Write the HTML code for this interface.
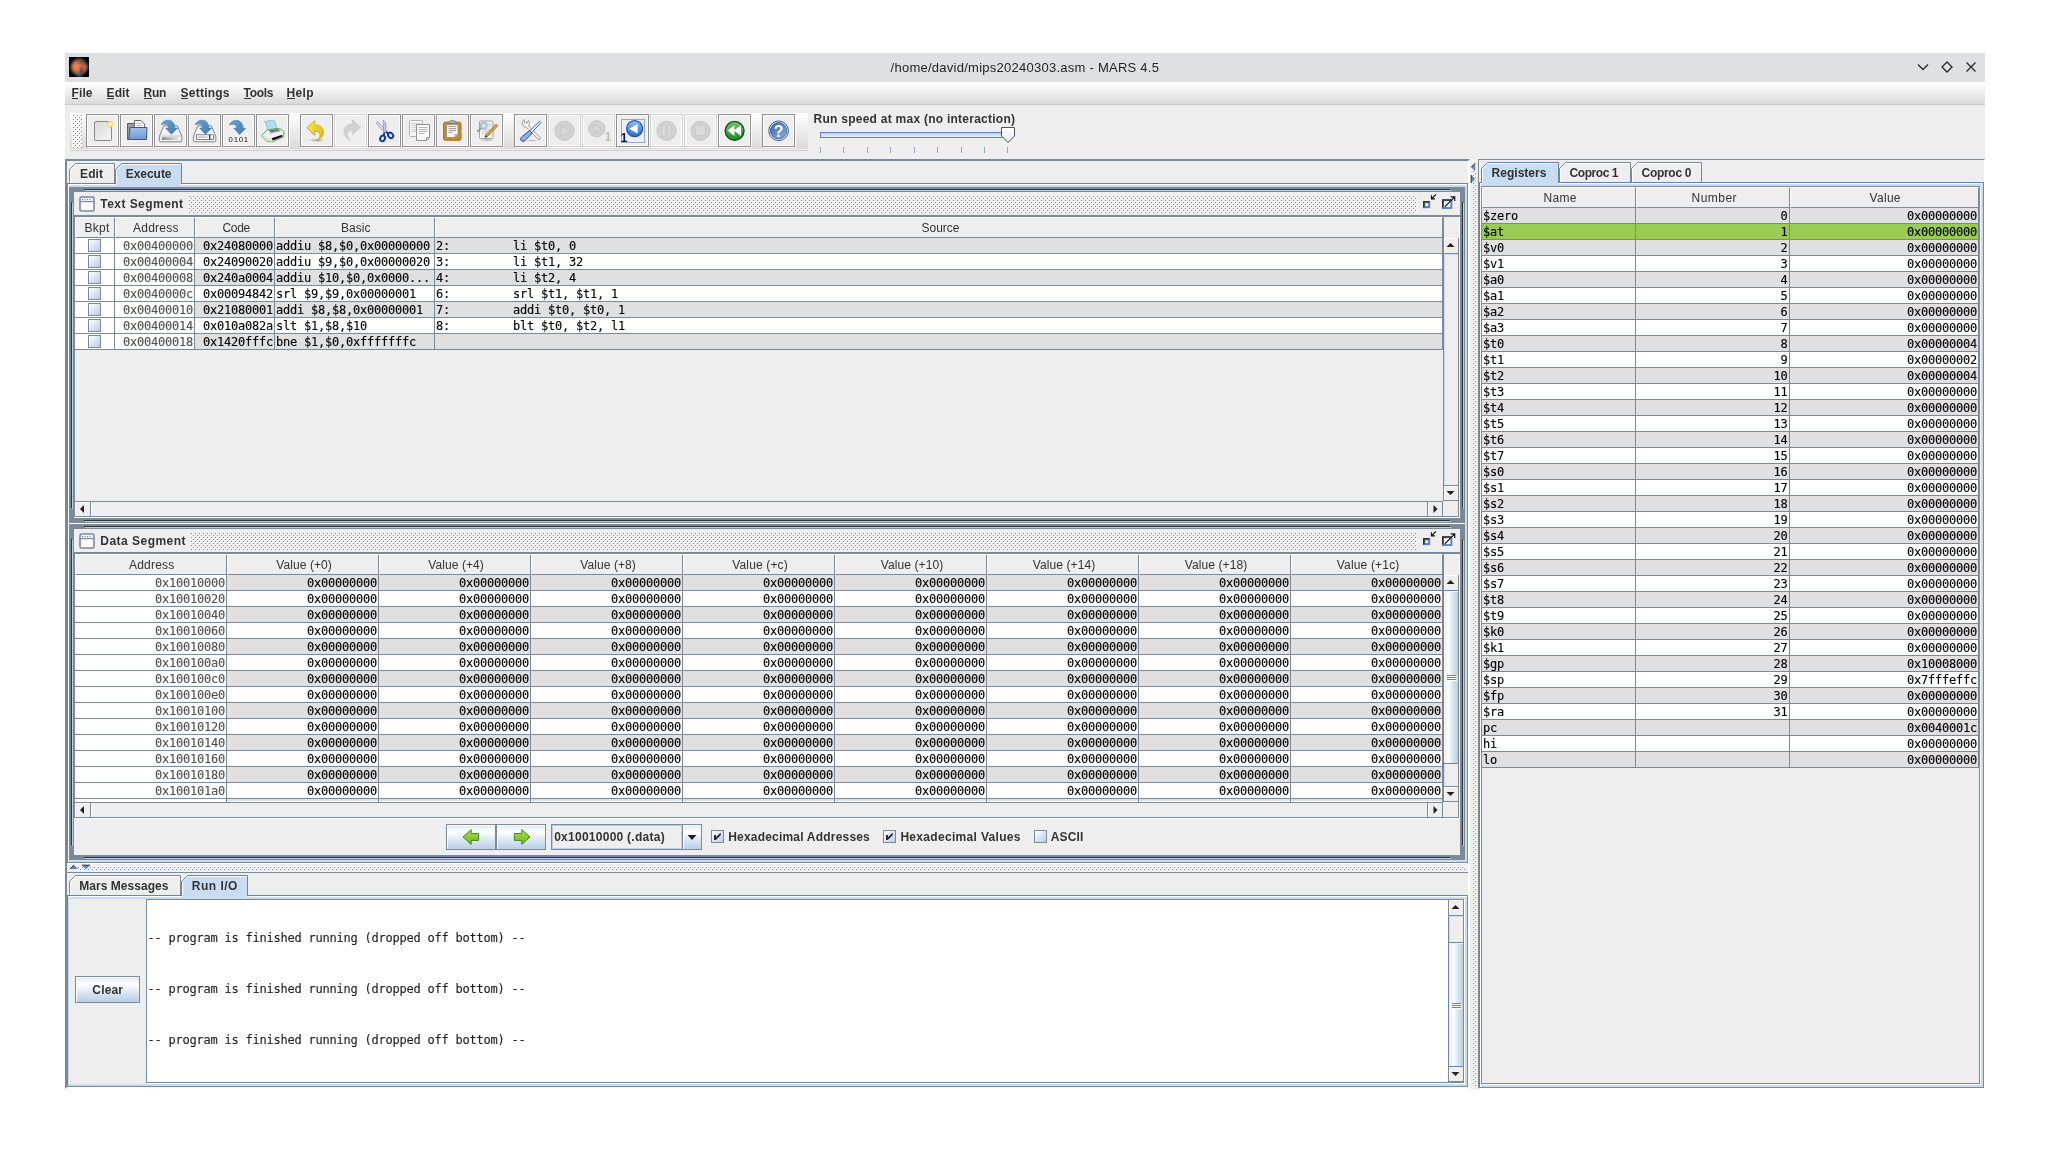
<!DOCTYPE html>
<html lang="en"><head><meta charset="utf-8"><title>MARS 4.5</title>
<style>
html,body{margin:0;padding:0;background:#fff;}
body{width:2050px;height:1166px;overflow:hidden;position:relative;font-family:"Liberation Sans",sans-serif;font-size:12px;color:#333;}
div{position:absolute;box-sizing:border-box;}
#w{left:0;top:0;width:2050px;height:1166px;will-change:transform;}
svg{position:absolute;overflow:visible;}
.t{white-space:pre;line-height:16px;}
.b{white-space:pre;line-height:16px;font-weight:bold;}
.m{font-family:"DejaVu Sans Mono","Liberation Mono",monospace;font-size:12px;letter-spacing:-0.225px;color:#000;white-space:pre;line-height:16px;-webkit-text-stroke:0.12px currentColor;}
.g{color:#505050;}
.btn{border:1px solid #8e8e8e;background:#eee;box-shadow:inset 1px 1px 0 #fff, inset -1px -1px 0 #fff;}
.btn.dis{border-color:#cfcfcf;}
.grad{background:linear-gradient(to bottom,#dde8f3 0%,#fff 30%,#dde8f3 60%,#b8cfe5 100%);}
.gradh{background:linear-gradient(to right,#dde8f3 0%,#fff 30%,#dde8f3 60%,#b8cfe5 100%);}
</style></head>
<body>
<div id="w">
<div style="left:65px;top:53px;width:1920px;height:1036px;background:#eeeeee;"></div>
<div style="left:65px;top:53px;width:1920px;height:29px;background:#dfe0e2;"></div>
<svg style="left:69px;top:57px" width="20" height="20" viewBox="0 0 20 20"><defs><filter id="mb" x="-20%" y="-20%" width="140%" height="140%"><feGaussianBlur stdDeviation="0.9"/></filter><radialGradient id="mg" cx="0.5" cy="0.5" r="0.5"><stop offset="0" stop-color="#d8704a"/><stop offset="0.6" stop-color="#b8623f"/><stop offset="0.85" stop-color="#6f5a48"/><stop offset="1" stop-color="#1c2c3a"/></radialGradient><clipPath id="mc"><rect width="20" height="20"/></clipPath></defs><rect width="20" height="20" fill="#000"/><g clip-path="url(#mc)"><g filter="url(#mb)"><circle cx="10" cy="10" r="8.9" fill="url(#mg)"/><ellipse cx="7.4" cy="9.8" rx="3.6" ry="4.2" fill="#f47e50" opacity="0.95"/><ellipse cx="13" cy="5.2" rx="3.6" ry="1.8" fill="#4a5244" opacity="0.8"/><ellipse cx="15.4" cy="11" rx="1.6" ry="2.4" fill="#c8745a" opacity="0.6"/><ellipse cx="12.3" cy="13.4" rx="1.3" ry="3.2" fill="#22324e" opacity="1"/><ellipse cx="10.5" cy="19.3" rx="3" ry="0.9" fill="#2a5aa8" opacity="0.8"/><ellipse cx="19.4" cy="10" rx="0.8" ry="2.6" fill="#1e4a8a" opacity="0.8"/></g></g></svg>
<div class="t" style="left:890.60px;top:60px;letter-spacing:0.254px;font-size:13px;color:#232629;">/home/david/mips20240303.asm - MARS 4.5</div>
<svg style="left:1910px;top:55px" width="75" height="25" viewBox="0 0 75 25" fill="none" stroke="#26292c" stroke-width="1.3"><path d="M8 9.5 L13 14.5 L18 9.5"/><path d="M37 7 L42 12 L37 17 L32 12 Z"/><path d="M56.5 7.5 L65.5 16.5 M65.5 7.5 L56.5 16.5"/></svg>
<div style="left:65px;top:82px;width:1920px;height:22px;background:linear-gradient(to bottom,#ffffff 0%,#dadada 100%);"></div>
<div style="left:65px;top:104px;width:1920px;height:1px;background:#cccccc;"></div>
<div class="b" style="left:71.60px;top:85px;letter-spacing:0.092px;text-decoration:none;">File</div>
<div class="b" style="left:106.60px;top:85px;letter-spacing:0.092px;text-decoration:none;">Edit</div>
<div class="b" style="left:143.60px;top:85px;letter-spacing:-0.237px;text-decoration:none;">Run</div>
<div class="b" style="left:180.60px;top:85px;letter-spacing:0.218px;text-decoration:none;">Settings</div>
<div class="b" style="left:243.60px;top:85px;letter-spacing:-0.306px;text-decoration:none;">Tools</div>
<div class="b" style="left:286.60px;top:85px;letter-spacing:0.300px;text-decoration:none;">Help</div>
<div style="left:71.5px;top:98px;width:6.6px;height:1px;background:#333;"></div>
<div style="left:106.5px;top:98px;width:7px;height:1px;background:#333;"></div>
<div style="left:143.5px;top:98px;width:8px;height:1px;background:#333;"></div>
<div style="left:180.5px;top:98px;width:7px;height:1px;background:#333;"></div>
<div style="left:243.5px;top:98px;width:7px;height:1px;background:#333;"></div>
<div style="left:286.5px;top:98px;width:8px;height:1px;background:#333;"></div>
<svg width="0" height="0" style="left:0;top:0"><defs><linearGradient id="gp" x1="0" y1="0" x2="1" y2="1"><stop offset="0" stop-color="#d8d8d8"/><stop offset="1" stop-color="#f6f6f6"/></linearGradient><linearGradient id="gf" x1="0" y1="0" x2="0" y2="1"><stop offset="0" stop-color="#a4c0e6"/><stop offset="1" stop-color="#6c9ad6"/></linearGradient><linearGradient id="ga" x1="0" y1="0" x2="1" y2="1"><stop offset="0" stop-color="#6aa6d6"/><stop offset="1" stop-color="#3a7cb4"/></linearGradient><linearGradient id="gbar" x1="0" y1="0" x2="1" y2="0"><stop offset="0" stop-color="#8a8a8a"/><stop offset="1" stop-color="#e8e8e8"/></linearGradient><linearGradient id="gpp" x1="0" y1="0" x2="0" y2="1"><stop offset="0" stop-color="#c8d4f8"/><stop offset="1" stop-color="#a4dcf4"/></linearGradient><linearGradient id="gy" x1="0" y1="0" x2="1" y2="1"><stop offset="0" stop-color="#fbe85a"/><stop offset="1" stop-color="#d9b800"/></linearGradient><radialGradient id="gsh"><stop offset="0" stop-color="#000" stop-opacity="0.3"/><stop offset="1" stop-color="#000" stop-opacity="0"/></radialGradient><radialGradient id="gm"><stop offset="0" stop-color="#e4f0fc"/><stop offset="1" stop-color="#9cc0e8"/></radialGradient><linearGradient id="gb" x1="0" y1="0" x2="0" y2="1"><stop offset="0" stop-color="#8cc0f8"/><stop offset="1" stop-color="#2a6ad8"/></linearGradient><linearGradient id="gg" x1="0" y1="0" x2="0" y2="1"><stop offset="0" stop-color="#6cc46c"/><stop offset="1" stop-color="#1e8a26"/></linearGradient><linearGradient id="gh" x1="0" y1="0" x2="1" y2="1"><stop offset="0" stop-color="#3a66b0"/><stop offset="1" stop-color="#8cb0e0"/></linearGradient><linearGradient id="gth" x1="0" y1="0" x2="0" y2="1"><stop offset="0" stop-color="#ffffff"/><stop offset="1" stop-color="#dde8f3"/></linearGradient><linearGradient id="ggr" x1="0" y1="0" x2="0" y2="1"><stop offset="0" stop-color="#b4e04a"/><stop offset="1" stop-color="#6cb41e"/></linearGradient><pattern id="bp" width="4" height="4" patternUnits="userSpaceOnUse"><rect x="0" y="0" width="1" height="1" fill="#fff"/><rect x="1" y="1" width="1" height="1" fill="#7a8a99"/><rect x="2" y="2" width="1" height="1" fill="#fff"/><rect x="3" y="3" width="1" height="1" fill="#7a8a99"/></pattern></defs></svg>
<div style="left:70px;top:113px;width:738px;height:36px;background:linear-gradient(to bottom,#ffffff 0%,#dadada 100%);"></div>
<div style="left:70px;top:150px;width:738px;height:1px;background:#cccccc;"></div>
<div style="left:72px;top:114px;width:10px;height:34px;background:#f5f5f5;"></div>
<svg style="left:72px;top:114px" width="10" height="34" shape-rendering="crispEdges"><rect width="10" height="34" fill="url(#bp)"/></svg>
<div style="left:87px;top:115px;width:33px;height:33px;background:#fff;"></div>
<div class="btn" style="left:86px;top:114px;width:33px;height:33px;"></div>
<svg style="left:86px;top:114px" width="33" height="33" viewBox="0 0 33 33" fill="none"><rect x="8.5" y="7.5" width="17" height="19" rx="1.2" fill="url(#gp)" stroke="#8a8a8a"/><circle cx="10.8" cy="14.8" r="0.6" fill="#fff"/><circle cx="10.8" cy="19.8" r="0.6" fill="#fff"/><circle cx="24" cy="10.3" r="2.5" fill="#fffef0" stroke="#efe251" stroke-width="1.4"/></svg>
<div style="left:121px;top:115px;width:33px;height:33px;background:#fff;"></div>
<div class="btn" style="left:120px;top:114px;width:33px;height:33px;"></div>
<svg style="left:120px;top:114px" width="33" height="33" viewBox="0 0 33 33" fill="none"><path d="M7.5 9.5 h7 v-1 h3 v17 h-10 z" fill="#9a9a9a" stroke="#5e5e5e"/><path d="M14.5 6.5 h6.5 l3.5 3.5 v8 h-10 z" fill="#f6f6f6" stroke="#6a6a6a"/><path d="M16.5 9.5 h5 M16.5 11.5 h5" stroke="#aaa" stroke-width="0.8"/><path d="M10 13.5 h17 l-0.6 12 h-17.6 z" fill="url(#gf)" stroke="#2c5aa8"/></svg>
<div style="left:155px;top:115px;width:33px;height:33px;background:#fff;"></div>
<div class="btn" style="left:154px;top:114px;width:33px;height:33px;"></div>
<svg style="left:154px;top:114px" width="33" height="33" viewBox="0 0 33 33" fill="none"><path d="M9.8 11.8 h13.6 l4.4 10.4 v4.2 q0 1.4 -1.4 1.4 h-19.6 q-1.4 0 -1.4 -1.4 v-4.2 z" fill="#f2f2f2" stroke="#858585"/><path d="M5.6 22 h22" stroke="#bdbdbd" stroke-width="0.8"/><rect x="8" y="23.2" width="17" height="2.8" fill="url(#gbar)"/><path transform="translate(0 0)" d="M7.2 10.7 C8.5 7.5 11.5 6 14.5 6.2 C18.5 6.5 20.8 9.5 20.8 14.1 L23.6 14.1 L17.4 20.3 L11.6 14.1 L14.6 14.1 C14.6 11.5 13 10 10.8 10 C9.4 10 8.2 10.3 7.2 10.7 Z" fill="url(#ga)" stroke="#3d76a8" stroke-width="0.6"/></svg>
<div style="left:189px;top:115px;width:33px;height:33px;background:#fff;"></div>
<div class="btn" style="left:188px;top:114px;width:33px;height:33px;"></div>
<svg style="left:188px;top:114px" width="33" height="33" viewBox="0 0 33 33" fill="none"><path d="M9.8 11.8 h13.6 l4.4 10.4 v4.2 q0 1.4 -1.4 1.4 h-19.6 q-1.4 0 -1.4 -1.4 v-4.2 z" fill="#f2f2f2" stroke="#858585"/><path d="M5.6 22 h22" stroke="#bdbdbd" stroke-width="0.8"/><rect x="8.4" y="20.8" width="17" height="4.6" fill="#fff" stroke="#666" stroke-width="0.8"/><rect x="10" y="22.3" width="9.5" height="1.7" fill="#c8c8c8"/><rect x="21.2" y="20.8" width="1.1" height="4.6" fill="#000"/><path transform="translate(0 0)" d="M7.2 10.7 C8.5 7.5 11.5 6 14.5 6.2 C18.5 6.5 20.8 9.5 20.8 14.1 L23.6 14.1 L17.4 20.3 L11.6 14.1 L14.6 14.1 C14.6 11.5 13 10 10.8 10 C9.4 10 8.2 10.3 7.2 10.7 Z" fill="url(#ga)" stroke="#3d76a8" stroke-width="0.6"/></svg>
<div style="left:223px;top:115px;width:33px;height:33px;background:#fff;"></div>
<div class="btn" style="left:222px;top:114px;width:33px;height:33px;"></div>
<svg style="left:222px;top:114px" width="33" height="33" viewBox="0 0 33 33" fill="none"><path transform="translate(0.2 0.2)" d="M7.2 10.7 C8.5 7.5 11.5 6 14.5 6.2 C18.5 6.5 20.8 9.5 20.8 14.1 L23.6 14.1 L17.4 20.3 L11.6 14.1 L14.6 14.1 C14.6 11.5 13 10 10.8 10 C9.4 10 8.2 10.3 7.2 10.7 Z" fill="url(#ga)" stroke="#3d76a8" stroke-width="0.6"/><text x="16.8" y="27.6" font-family="Liberation Sans,sans-serif" font-size="7.8" letter-spacing="0.75" text-anchor="middle" fill="#222" stroke="none">0101</text></svg>
<div style="left:257px;top:115px;width:33px;height:33px;background:#fff;"></div>
<div class="btn" style="left:256px;top:114px;width:33px;height:33px;"></div>
<svg style="left:256px;top:114px" width="33" height="33" viewBox="0 0 33 33" fill="none"><path d="M8.4 7.6 q1.4 -0.2 2.2 -0.6 l7.8 -0.8 l2.8 8.2 l-9.2 2.2 l-2 -7 q-0.4 -1.4 -1.6 -2 z" fill="url(#gpp)" stroke="#5cc7c0" stroke-width="0.7"/><path d="M6.1 21 l5 -5.2 l12.5 -1.4 l4.4 3.3 l-0.4 5.3 l-11.2 4.9 l-5.9 -0.6 l-4.4 -5 z" fill="#f2f2f2" stroke="#3aa63a" stroke-width="0.8"/><path d="M12.4 16.6 l9.4 -1.6 l2.6 1.2 l-9.6 2.2 z" fill="#6a6a78"/><path d="M13.6 19.4 l10.8 -2.4" stroke="#9a9aa8" stroke-width="0.8"/><path d="M6.6 21.2 l8.4 3.2 l0.6 3.2 l-4.8 -0.6 l-4 -4.6 z" fill="#dedede"/><path d="M15.6 24.2 l10.6 -3.4 l0.2 2 l-9.6 3.8 z" fill="#0a0a0a"/></svg>
<div style="left:301px;top:115px;width:33px;height:33px;background:#fff;"></div>
<div class="btn" style="left:300px;top:114px;width:33px;height:33px;"></div>
<svg style="left:300px;top:114px" width="33" height="33" viewBox="0 0 33 33" fill="none"><g transform="translate(0.4 0.8)"><ellipse cx="16.5" cy="25.4" rx="8.5" ry="2" fill="url(#gsh)"/><path d="M6.4 13 l8 -7.2 l0 4.2 c6 0 8.6 3.6 8.6 7.8 c0 4 -3 7 -6.6 8 c2.2 -1.6 3.4 -3.6 3.2 -5.8 c-0.2 -2.6 -2.2 -3.6 -5.2 -3.4 l0 4.2 z" fill="url(#gy)" stroke="#c9a800" stroke-width="0.8"/></g></svg>
<div style="left:335px;top:115px;width:33px;height:33px;background:#fff;"></div>
<div class="btn dis" style="left:334px;top:114px;width:33px;height:33px;"></div>
<svg style="left:334px;top:114px" width="33" height="33" viewBox="0 0 33 33" fill="none"><g transform="translate(33 0) scale(-1 1)" opacity="0.9"><ellipse cx="16.5" cy="25.4" rx="8.5" ry="2" fill="none"/><path d="M6.4 13 l8 -7.2 l0 4.2 c6 0 8.6 3.6 8.6 7.8 c0 4 -3 7 -6.6 8 c2.2 -1.6 3.4 -3.6 3.2 -5.8 c-0.2 -2.6 -2.2 -3.6 -5.2 -3.4 l0 4.2 z" fill="#cfcfcf" stroke="#c4c4c4" stroke-width="0.8"/></g></svg>
<div style="left:369px;top:115px;width:33px;height:33px;background:#fff;"></div>
<div class="btn" style="left:368px;top:114px;width:33px;height:33px;"></div>
<svg style="left:368px;top:114px" width="33" height="33" viewBox="0 0 33 33" fill="none"><path d="M8.2 8.8 l1.8 -1 l8.8 9.6 l-2 1.6 z" fill="#dcdcee" stroke="#8c8ca8" stroke-width="0.7"/><path d="M15.2 6 l2.4 2.6 l0.6 9.2 l-2.4 1.8 z" fill="#c8c8e0" stroke="#8c8ca8" stroke-width="0.7"/><ellipse cx="14.6" cy="24.4" rx="2.3" ry="2.9" fill="none" stroke="#0a32b4" stroke-width="1.9" transform="rotate(28 14.6 24.4)"/><ellipse cx="22.6" cy="21.4" rx="2.3" ry="2.9" fill="none" stroke="#0a32b4" stroke-width="1.9" transform="rotate(-40 22.6 21.4)"/><path d="M16.6 18.6 l-0.8 3 M18.2 17.8 l2.2 1.6" stroke="#0a32b4" stroke-width="1.9"/></svg>
<div style="left:403px;top:115px;width:33px;height:33px;background:#fff;"></div>
<div class="btn" style="left:402px;top:114px;width:33px;height:33px;"></div>
<svg style="left:402px;top:114px" width="33" height="33" viewBox="0 0 33 33" fill="none"><rect x="7.5" y="6.5" width="13" height="16" rx="0.8" fill="#f4f4f4" stroke="#b4b4b4"/><path d="M9.5 9.5 h9 M9.5 11.5 h9 M9.5 13.5 h9 M9.5 15.5 h9 M9.5 17.5 h6" stroke="#cfcfcf" stroke-width="1"/><path d="M14.5 10.5 h13 v13 l-3 3 h-10 z" fill="#fbfbfb" stroke="#8e8e8e"/><path d="M16.5 13.5 h9 M16.5 15.5 h9 M16.5 17.5 h9 M16.5 19.5 h6" stroke="#b4b4b4" stroke-width="1"/><path d="M24.5 26.5 v-3 h3 z" fill="#d8d8d8" stroke="#8e8e8e" stroke-width="0.8"/></svg>
<div style="left:437px;top:115px;width:33px;height:33px;background:#fff;"></div>
<div class="btn" style="left:436px;top:114px;width:33px;height:33px;"></div>
<svg style="left:436px;top:114px" width="33" height="33" viewBox="0 0 33 33" fill="none"><rect x="7.6" y="8.2" width="17.4" height="18" rx="1.6" fill="#c98a2a" stroke="#a86a10"/><path d="M10.5 10.5 h11.5 v10 l-3 3 h-8.5 z" fill="#f4f4f2" stroke="#8a8a80" stroke-width="0.8"/><path d="M12.5 12.5 h7.5 M12.5 14.5 h7.5 M12.5 16.5 h7.5 M12.5 18.5 h4" stroke="#a0a098" stroke-width="1"/><path d="M12.4 9.4 q0 -3 4 -3 q4 0 4 3 z" fill="#b0b0a8" stroke="#77776f" stroke-width="0.8"/><path d="M19 23.5 v-3 h3 z" fill="#d8d8d0" stroke="#8a8a80" stroke-width="0.6"/></svg>
<div style="left:471px;top:115px;width:33px;height:33px;background:#fff;"></div>
<div class="btn" style="left:470px;top:114px;width:33px;height:33px;"></div>
<svg style="left:470px;top:114px" width="33" height="33" viewBox="0 0 33 33" fill="none"><ellipse cx="17" cy="26" rx="7.5" ry="1.4" fill="url(#gsh)"/><rect x="9.5" y="7" width="13.5" height="17.5" rx="0.8" fill="#f4f4f4" stroke="#a4a4a4"/><path d="M12 15.5 h9 M12 17.5 h9 M12 19.5 h9 M18 10.5 h3.5 M18 12.5 h3.5" stroke="#cfcfcf" stroke-width="1"/><path d="M8 17 l3.4 -3" stroke="#9a9a9a" stroke-width="2.2" stroke-linecap="round"/><circle cx="13.8" cy="11.6" r="3.6" fill="url(#gm)" stroke="#a8b4c4" stroke-width="0.9"/><path d="M26.2 10 l1.6 1.8 l-10.2 10.6 l-2.6 1 l0.8 -2.8 z" fill="#e0a040" stroke="#a06a18" stroke-width="0.7"/><path d="M15 23.4 l0.7 -2.4 l1.7 1.5 z" fill="#222"/></svg>
<div style="left:515px;top:115px;width:33px;height:33px;background:#fff;"></div>
<div class="btn" style="left:514px;top:114px;width:33px;height:33px;"></div>
<svg style="left:514px;top:114px" width="33" height="33" viewBox="0 0 33 33" fill="none"><ellipse cx="18" cy="26.5" rx="6" ry="1" fill="url(#gsh)"/><path d="M9 11 q-2 -3 1 -5.4 l0.6 3 l2.4 0.4 l1.4 -2.6 q2.2 2.6 0.2 5.6 l11.6 11.6 q0.6 2 -1.8 2 l-11.8 -12 q-2.2 0.4 -3.6 -2.6 z" fill="#f4f4f4" stroke="#8c8c8c" stroke-width="0.8"/><path d="M25.6 7.2 l1.4 1.4 l-9.4 10.2 l-2 -1.8 z" fill="#e8f0fa" stroke="#2e5ea6" stroke-width="0.9"/><path d="M15.4 16.6 l2.8 2.6 l-7.4 7.6 q-2 1.4 -3.6 -0.2 q-1.4 -1.8 0.2 -3.4 z" fill="#8eb0dc" stroke="#214f96" stroke-width="1"/></svg>
<div style="left:549px;top:115px;width:33px;height:33px;background:#fff;"></div>
<div class="btn dis" style="left:548px;top:114px;width:33px;height:33px;"></div>
<svg style="left:548px;top:114px" width="33" height="33" viewBox="0 0 33 33" fill="none"><circle cx="16.5" cy="16.8" r="9.6" fill="#d2d2d2" stroke="#c6c6c6" stroke-width="1"/><path d="M13 11.4 l9 5.4 l-9 5.4 z" fill="#d8d8d8" stroke="#c2c2c2" stroke-width="0.8"/></svg>
<div style="left:583px;top:115px;width:33px;height:33px;background:#fff;"></div>
<div class="btn dis" style="left:582px;top:114px;width:33px;height:33px;"></div>
<svg style="left:582px;top:114px" width="33" height="33" viewBox="0 0 33 33" fill="none"><circle cx="14.8" cy="14.8" r="8.2" fill="#d2d2d2" stroke="#c6c6c6" stroke-width="1"/><path d="M12 10.2 l7.4 4.6 l-7.4 4.6 z" fill="#d8d8d8" stroke="#c2c2c2" stroke-width="0.8"/><text x="22.8" y="27.4" font-size="12" font-weight="bold" fill="#bdbdbd" stroke="none" font-family="Liberation Sans,sans-serif">1</text></svg>
<div style="left:617px;top:115px;width:33px;height:33px;background:#fff;"></div>
<div class="btn" style="left:616px;top:114px;width:33px;height:33px;"></div>
<svg style="left:616px;top:114px" width="33" height="33" viewBox="0 0 33 33" fill="none"><rect x="5.5" y="5.5" width="23" height="23" fill="none" stroke="#8fa9cf" stroke-width="1"/><circle cx="18.6" cy="14.6" r="8" fill="url(#gb)" stroke="#1f4fa6" stroke-width="1.2"/><path d="M21.6 10 v9.4 l-8.4 -4.7 z" fill="#fff"/><text x="4.6" y="27.6" font-size="12.5" font-weight="bold" fill="#0a1a4a" stroke="none" font-family="Liberation Sans,sans-serif">1</text></svg>
<div style="left:651px;top:115px;width:33px;height:33px;background:#fff;"></div>
<div class="btn dis" style="left:650px;top:114px;width:33px;height:33px;"></div>
<svg style="left:650px;top:114px" width="33" height="33" viewBox="0 0 33 33" fill="none"><circle cx="16.5" cy="16.8" r="9.6" fill="#d2d2d2" stroke="#c6c6c6" stroke-width="1"/><rect x="12" y="11.4" width="3.4" height="10.6" fill="#dcdcdc" stroke="#c4c4c4" stroke-width="0.7"/><rect x="17.8" y="11.4" width="3.4" height="10.6" fill="#dcdcdc" stroke="#c4c4c4" stroke-width="0.7"/></svg>
<div style="left:685px;top:115px;width:33px;height:33px;background:#fff;"></div>
<div class="btn dis" style="left:684px;top:114px;width:33px;height:33px;"></div>
<svg style="left:684px;top:114px" width="33" height="33" viewBox="0 0 33 33" fill="none"><circle cx="16.5" cy="16.8" r="9.6" fill="#d2d2d2" stroke="#c6c6c6" stroke-width="1"/><rect x="11.6" y="11.8" width="9.8" height="9.8" fill="#dadada" stroke="#c4c4c4" stroke-width="0.7"/></svg>
<div style="left:719px;top:115px;width:33px;height:33px;background:#fff;"></div>
<div class="btn" style="left:718px;top:114px;width:33px;height:33px;"></div>
<svg style="left:718px;top:114px" width="33" height="33" viewBox="0 0 33 33" fill="none"><circle cx="16.6" cy="16.8" r="9.4" fill="url(#gg)" stroke="#0c5a12" stroke-width="1.4"/><path d="M16.4 11 v11 l-7 -5.5 z M23 11 v11 l-7 -5.5 z" fill="#fff"/></svg>
<div style="left:763px;top:115px;width:33px;height:33px;background:#fff;"></div>
<div class="btn" style="left:762px;top:114px;width:33px;height:33px;"></div>
<svg style="left:762px;top:114px" width="33" height="33" viewBox="0 0 33 33" fill="none"><circle cx="16.6" cy="16.8" r="9.8" fill="#fff" stroke="#2c559c" stroke-width="1"/><circle cx="16.6" cy="16.8" r="8.2" fill="url(#gh)" stroke="#2c559c" stroke-width="0.8"/><text x="16.7" y="22.6" font-size="16" font-weight="bold" fill="#fff" stroke="none" text-anchor="middle" font-family="Liberation Sans,sans-serif">?</text></svg>
<div class="b" style="left:813.60px;top:111px;letter-spacing:0.251px;">Run speed at max (no interaction)</div>
<div style="left:820px;top:132px;width:189px;height:6px;border:1px solid #6382bf;background:linear-gradient(to bottom,#b8cfe5,#e6eef6);"></div>
<svg style="left:1000px;top:126px" width="17" height="18" viewBox="0 0 17 18"><path d="M1.5 1.5 h13 v8.5 l-6.5 6.5 l-6.5 -6.5 z" fill="url(#gth)" stroke="#4a5560" stroke-width="1"/></svg>
<div style="left:820px;top:147px;width:1px;height:6px;background:#8ea6cd;"></div>
<div style="left:843px;top:147px;width:1px;height:6px;background:#8ea6cd;"></div>
<div style="left:867px;top:147px;width:1px;height:6px;background:#8ea6cd;"></div>
<div style="left:890px;top:147px;width:1px;height:6px;background:#8ea6cd;"></div>
<div style="left:914px;top:147px;width:1px;height:6px;background:#8ea6cd;"></div>
<div style="left:937px;top:147px;width:1px;height:6px;background:#8ea6cd;"></div>
<div style="left:961px;top:147px;width:1px;height:6px;background:#8ea6cd;"></div>
<div style="left:984px;top:147px;width:1px;height:6px;background:#8ea6cd;"></div>
<div style="left:1007px;top:147px;width:1px;height:6px;background:#8ea6cd;"></div>
<div style="left:65px;top:159px;width:1405px;height:930px;border-top:2px solid #7a8a99;border-left:2px solid #7a8a99;border-right:2px solid #fff;border-bottom:2px solid #fff;"></div>
<div style="left:67px;top:183px;width:1401px;height:680px;background:#c8ddf2;border:1px solid #6382bf;border-right-color:#7a8a99;border-bottom-color:#7a8a99;"></div>
<div style="left:68px;top:184px;width:1399px;height:1px;background:#fff;"></div>
<div style="left:68px;top:184px;width:1px;height:678px;background:#fff;"></div>
<svg style="left:69px;top:163px" width="46" height="20" viewBox="0 0 46 20"><path d="M0.5 20 V6.5 L6.5 0.5 H45.5 V20 Z" fill="#eeeeee" stroke="none"/><path d="M1.5 20 V7 L7 1.5 H45" fill="none" stroke="#fff" stroke-width="1"/><path d="M0.5 20 V6.5 L6.5 0.5 H45.5 V20" fill="none" stroke="#7a8a99" stroke-width="1"/></svg>
<div class="b" style="left:80.00px;top:166px;letter-spacing:0.125px;">Edit</div>
<svg style="left:115px;top:163px" width="67" height="21" viewBox="0 0 67 21"><path d="M0.5 21 V6.5 L6.5 0.5 H66.5 V21 Z" fill="#c8ddf2" stroke="none"/><path d="M1.5 21 V7 L7 1.5 H66" fill="none" stroke="#fff" stroke-width="1"/><path d="M0.5 21 V6.5 L6.5 0.5 H66.5 V21" fill="none" stroke="#6382bf" stroke-width="1"/></svg>
<div class="b" style="left:125.80px;top:166px;letter-spacing:-0.050px;">Execute</div>
<div style="left:116px;top:183px;width:65px;height:2px;background:#c8ddf2;"></div>
<div style="left:69px;top:187px;width:1396px;height:673px;background:#fff;"></div>
<div style="left:69px;top:187px;width:1396px;height:336px;background:#7a8a99;"></div>
<div style="left:84px;top:189px;width:1366px;height:1px;background:#333;"></div>
<div style="left:84px;top:520px;width:1366px;height:1px;background:#333;"></div>
<div style="left:71px;top:202px;width:1px;height:306px;background:#333;"></div>
<div style="left:1462px;top:202px;width:1px;height:306px;background:#333;"></div>
<div style="left:85px;top:190px;width:1366px;height:1px;background:#b8cfe5;"></div>
<div style="left:85px;top:521px;width:1366px;height:1px;background:#b8cfe5;"></div>
<div style="left:72px;top:203px;width:1px;height:306px;background:#b8cfe5;"></div>
<div style="left:1463px;top:203px;width:1px;height:306px;background:#b8cfe5;"></div>
<div style="left:74px;top:192px;width:1386px;height:326px;background:#eeeeee;"></div>
<div style="left:74px;top:215px;width:1386px;height:2px;background:#7a8a99;"></div>
<svg style="left:79px;top:196px" width="16" height="16" viewBox="0 0 16 16"><rect x="1" y="1" width="14" height="14" rx="1.5" fill="#fff" stroke="#7a8a99" stroke-width="1.6"/><rect x="2" y="2" width="12" height="3.4" fill="#eef2fa"/><path d="M3 3.5 h1 M5.5 3.5 h1 M8 3.5 h1 M10.5 3.5 h1" stroke="#6382bf" stroke-width="1"/><path d="M1.5 5.6 h13" stroke="#7a8a99" stroke-width="1.2"/></svg>
<div class="b" style="left:100.30px;top:196px;letter-spacing:0.450px;">Text Segment</div>
<svg style="left:188px;top:195px" width="1229" height="18" shape-rendering="crispEdges"><rect width="1229" height="18" fill="url(#bp)"/></svg>
<svg style="left:1423px;top:193px" width="36" height="20" viewBox="0 0 36 20" fill="none"><rect x="0" y="8" width="7.2" height="7.2" fill="#6382bf"/><path d="M0 8.8 H6.4 M0.8 8 V14.4" stroke="#333" stroke-width="1.6"/><rect x="2.4" y="10.4" width="2.6" height="2.6" fill="#fff"/><path d="M13 1.3 L8.8 5.5 M8.4 2.3 V5.9 H12" stroke="#111" stroke-width="1.1"/><rect x="19" y="6.2" width="10.3" height="9.8" fill="#6382bf"/><path d="M19 7 H27.8 M19.8 6.2 V14.4" stroke="#333" stroke-width="1.6"/><rect x="21" y="8.2" width="6.4" height="5.9" fill="#f4f4f4"/><path d="M21.8 13.8 L31.2 4.4 M27.6 3.9 H31.7 V8" stroke="#111" stroke-width="1.2"/></svg>
<div style="left:74px;top:217px;width:1385px;height:300px;border:1px solid #7a8a99;background:#eeeeee;"></div>
<div style="left:75px;top:217px;width:40px;height:21px;background:#eeeeee;border-right:1px solid #7a8a99;border-bottom:1px solid #7a8a99;border-top:1px solid #fff;border-left:1px solid #fff;"></div>
<div class="t" style="left:84.50px;top:220px;letter-spacing:0.233px;">Bkpt</div>
<div style="left:115px;top:217px;width:80px;height:21px;background:#eeeeee;border-right:1px solid #7a8a99;border-bottom:1px solid #7a8a99;border-top:1px solid #fff;border-left:1px solid #fff;"></div>
<div class="t" style="left:133.10px;top:220px;letter-spacing:0.217px;">Address</div>
<div style="left:195px;top:217px;width:80px;height:21px;background:#eeeeee;border-right:1px solid #7a8a99;border-bottom:1px solid #7a8a99;border-top:1px solid #fff;border-left:1px solid #fff;"></div>
<div class="t" style="left:222.40px;top:220px;letter-spacing:-0.283px;">Code</div>
<div style="left:275px;top:217px;width:160px;height:21px;background:#eeeeee;border-right:1px solid #7a8a99;border-bottom:1px solid #7a8a99;border-top:1px solid #fff;border-left:1px solid #fff;"></div>
<div class="t" style="left:341.00px;top:220px;letter-spacing:0.031px;">Basic</div>
<div style="left:435px;top:217px;width:1008px;height:21px;background:#eeeeee;border-right:1px solid #7a8a99;border-bottom:1px solid #7a8a99;border-top:1px solid #fff;border-left:1px solid #fff;"></div>
<div class="t" style="left:921.50px;top:220px;letter-spacing:0.000px;">Source</div>
<div style="left:1443px;top:217px;width:16px;height:21px;background:#eeeeee;border-left:1px solid #7a8a99;"></div>
<div style="left:75px;top:238px;width:1368px;height:15px;background:#fff;"></div>
<div style="left:195px;top:238px;width:1248px;height:15px;background:#e0e0e0;"></div>
<div style="left:75px;top:253px;width:1368px;height:1px;background:#7a8a99;"></div>
<div style="left:88px;top:239px;width:13px;height:13px;border:1px solid #7a8a99;background:linear-gradient(135deg,#ffffff 0%,#dde8f3 45%,#b8cfe5 100%);"></div>
<div class="m g" style="left:115px;top:238px;width:78px;text-align:right;">0x00400000</div>
<div class="m" style="left:195px;top:238px;width:78px;text-align:right;">0x24080000</div>
<div class="m" style="left:276px;top:238px;">addiu $8,$0,0x00000000</div>
<div class="m" style="left:436px;top:238px;">2:         li $t0, 0</div>
<div style="left:75px;top:254px;width:1368px;height:15px;background:#fff;"></div>
<div style="left:75px;top:269px;width:1368px;height:1px;background:#7a8a99;"></div>
<div style="left:88px;top:255px;width:13px;height:13px;border:1px solid #7a8a99;background:linear-gradient(135deg,#ffffff 0%,#dde8f3 45%,#b8cfe5 100%);"></div>
<div class="m g" style="left:115px;top:254px;width:78px;text-align:right;">0x00400004</div>
<div class="m" style="left:195px;top:254px;width:78px;text-align:right;">0x24090020</div>
<div class="m" style="left:276px;top:254px;">addiu $9,$0,0x00000020</div>
<div class="m" style="left:436px;top:254px;">3:         li $t1, 32</div>
<div style="left:75px;top:270px;width:1368px;height:15px;background:#fff;"></div>
<div style="left:195px;top:270px;width:1248px;height:15px;background:#e0e0e0;"></div>
<div style="left:75px;top:285px;width:1368px;height:1px;background:#7a8a99;"></div>
<div style="left:88px;top:271px;width:13px;height:13px;border:1px solid #7a8a99;background:linear-gradient(135deg,#ffffff 0%,#dde8f3 45%,#b8cfe5 100%);"></div>
<div class="m g" style="left:115px;top:270px;width:78px;text-align:right;">0x00400008</div>
<div class="m" style="left:195px;top:270px;width:78px;text-align:right;">0x240a0004</div>
<div class="m" style="left:276px;top:270px;">addiu $10,$0,0x0000...</div>
<div class="m" style="left:436px;top:270px;">4:         li $t2, 4</div>
<div style="left:75px;top:286px;width:1368px;height:15px;background:#fff;"></div>
<div style="left:75px;top:301px;width:1368px;height:1px;background:#7a8a99;"></div>
<div style="left:88px;top:287px;width:13px;height:13px;border:1px solid #7a8a99;background:linear-gradient(135deg,#ffffff 0%,#dde8f3 45%,#b8cfe5 100%);"></div>
<div class="m g" style="left:115px;top:286px;width:78px;text-align:right;">0x0040000c</div>
<div class="m" style="left:195px;top:286px;width:78px;text-align:right;">0x00094842</div>
<div class="m" style="left:276px;top:286px;">srl $9,$9,0x00000001</div>
<div class="m" style="left:436px;top:286px;">6:         srl $t1, $t1, 1</div>
<div style="left:75px;top:302px;width:1368px;height:15px;background:#fff;"></div>
<div style="left:195px;top:302px;width:1248px;height:15px;background:#e0e0e0;"></div>
<div style="left:75px;top:317px;width:1368px;height:1px;background:#7a8a99;"></div>
<div style="left:88px;top:303px;width:13px;height:13px;border:1px solid #7a8a99;background:linear-gradient(135deg,#ffffff 0%,#dde8f3 45%,#b8cfe5 100%);"></div>
<div class="m g" style="left:115px;top:302px;width:78px;text-align:right;">0x00400010</div>
<div class="m" style="left:195px;top:302px;width:78px;text-align:right;">0x21080001</div>
<div class="m" style="left:276px;top:302px;">addi $8,$8,0x00000001</div>
<div class="m" style="left:436px;top:302px;">7:         addi $t0, $t0, 1</div>
<div style="left:75px;top:318px;width:1368px;height:15px;background:#fff;"></div>
<div style="left:75px;top:333px;width:1368px;height:1px;background:#7a8a99;"></div>
<div style="left:88px;top:319px;width:13px;height:13px;border:1px solid #7a8a99;background:linear-gradient(135deg,#ffffff 0%,#dde8f3 45%,#b8cfe5 100%);"></div>
<div class="m g" style="left:115px;top:318px;width:78px;text-align:right;">0x00400014</div>
<div class="m" style="left:195px;top:318px;width:78px;text-align:right;">0x010a082a</div>
<div class="m" style="left:276px;top:318px;">slt $1,$8,$10</div>
<div class="m" style="left:436px;top:318px;">8:         blt $t0, $t2, l1</div>
<div style="left:75px;top:334px;width:1368px;height:15px;background:#fff;"></div>
<div style="left:195px;top:334px;width:1248px;height:15px;background:#e0e0e0;"></div>
<div style="left:75px;top:349px;width:1368px;height:1px;background:#7a8a99;"></div>
<div style="left:88px;top:335px;width:13px;height:13px;border:1px solid #7a8a99;background:linear-gradient(135deg,#ffffff 0%,#dde8f3 45%,#b8cfe5 100%);"></div>
<div class="m g" style="left:115px;top:334px;width:78px;text-align:right;">0x00400018</div>
<div class="m" style="left:195px;top:334px;width:78px;text-align:right;">0x1420fffc</div>
<div class="m" style="left:276px;top:334px;">bne $1,$0,0xfffffffc</div>
<div class="m" style="left:436px;top:334px;"></div>
<div style="left:114px;top:238px;width:1px;height:112px;background:#7a8a99;"></div>
<div style="left:194px;top:238px;width:1px;height:112px;background:#7a8a99;"></div>
<div style="left:274px;top:238px;width:1px;height:112px;background:#7a8a99;"></div>
<div style="left:434px;top:238px;width:1px;height:112px;background:#7a8a99;"></div>
<div style="left:1442px;top:238px;width:1px;height:112px;background:#7a8a99;"></div>
<div style="left:1459px;top:217px;width:1px;height:301px;background:#fff;"></div>
<div style="left:74px;top:517px;width:1386px;height:1px;background:#fff;"></div>
<div style="left:1443px;top:238px;width:15px;height:263px;background:#eeeeee;border-left:1px solid #7a8a99;"></div>
<div style="left:1444px;top:238px;width:14px;height:1px;background:#fff;"></div>
<div style="left:1444px;top:238px;width:1px;height:15px;background:#fff;"></div>
<div style="left:1444px;top:253px;width:14px;height:1px;background:#7a8a99;"></div>
<div style="left:1444px;top:254px;width:14px;height:1px;background:#c8ddf2;"></div>
<div style="left:1444px;top:254px;width:1px;height:231px;background:#c8ddf2;"></div>
<svg style="left:1443px;top:237px" width="15" height="16" viewBox="0 0 15 16"><path d="M3.5 10.0 L7.5 6.0 L11.5 10.0 Z" fill="#222"/></svg>
<div style="left:1444px;top:485px;width:14px;height:1px;background:#7a8a99;"></div>
<div style="left:1444px;top:486px;width:14px;height:1px;background:#fff;"></div>
<div style="left:1444px;top:486px;width:1px;height:14px;background:#fff;"></div>
<div style="left:1444px;top:500px;width:14px;height:1px;background:#7a8a99;"></div>
<svg style="left:1443px;top:485px" width="15" height="16" viewBox="0 0 15 16"><path d="M3.5 6.0 L7.5 10.0 L11.5 6.0 Z" fill="#222"/></svg>
<div style="left:75px;top:501px;width:1368px;height:15px;background:#eeeeee;border-top:1px solid #7a8a99;"></div>
<svg style="left:75px;top:502px" width="14" height="14" viewBox="0 0 14 14"><path d="M9.0 3.0 L5.0 7.0 L9.0 11.0 Z" fill="#222"/></svg>
<svg style="left:1428px;top:502px" width="15" height="14" viewBox="0 0 15 14"><path d="M5.5 3.0 L9.5 7.0 L5.5 11.0 Z" fill="#222"/></svg>
<div style="left:90px;top:502px;width:1px;height:14px;background:#7a8a99;"></div>
<div style="left:1427px;top:502px;width:1px;height:14px;background:#7a8a99;"></div>
<div style="left:1442px;top:502px;width:1px;height:14px;background:#7a8a99;"></div>
<div style="left:91px;top:502px;width:1px;height:14px;background:#fff;"></div>
<div style="left:1428px;top:502px;width:1px;height:14px;background:#fff;"></div>
<div style="left:75px;top:502px;width:15px;height:1px;background:#fff;"></div>
<div style="left:75px;top:502px;width:1px;height:14px;background:#fff;"></div>
<div style="left:69px;top:524px;width:1396px;height:336px;background:#7a8a99;"></div>
<div style="left:84px;top:526px;width:1366px;height:1px;background:#333;"></div>
<div style="left:84px;top:857px;width:1366px;height:1px;background:#333;"></div>
<div style="left:71px;top:539px;width:1px;height:306px;background:#333;"></div>
<div style="left:1462px;top:539px;width:1px;height:306px;background:#333;"></div>
<div style="left:85px;top:527px;width:1366px;height:1px;background:#b8cfe5;"></div>
<div style="left:85px;top:858px;width:1366px;height:1px;background:#b8cfe5;"></div>
<div style="left:72px;top:540px;width:1px;height:306px;background:#b8cfe5;"></div>
<div style="left:1463px;top:540px;width:1px;height:306px;background:#b8cfe5;"></div>
<div style="left:74px;top:529px;width:1386px;height:326px;background:#eeeeee;"></div>
<div style="left:74px;top:552px;width:1386px;height:2px;background:#7a8a99;"></div>
<svg style="left:79px;top:533px" width="16" height="16" viewBox="0 0 16 16"><rect x="1" y="1" width="14" height="14" rx="1.5" fill="#fff" stroke="#7a8a99" stroke-width="1.6"/><rect x="2" y="2" width="12" height="3.4" fill="#eef2fa"/><path d="M3 3.5 h1 M5.5 3.5 h1 M8 3.5 h1 M10.5 3.5 h1" stroke="#6382bf" stroke-width="1"/><path d="M1.5 5.6 h13" stroke="#7a8a99" stroke-width="1.2"/></svg>
<div class="b" style="left:100.30px;top:533px;letter-spacing:0.473px;">Data Segment</div>
<svg style="left:190px;top:532px" width="1227" height="18" shape-rendering="crispEdges"><rect width="1227" height="18" fill="url(#bp)"/></svg>
<svg style="left:1423px;top:530px" width="36" height="20" viewBox="0 0 36 20" fill="none"><rect x="0" y="8" width="7.2" height="7.2" fill="#6382bf"/><path d="M0 8.8 H6.4 M0.8 8 V14.4" stroke="#333" stroke-width="1.6"/><rect x="2.4" y="10.4" width="2.6" height="2.6" fill="#fff"/><path d="M13 1.3 L8.8 5.5 M8.4 2.3 V5.9 H12" stroke="#111" stroke-width="1.1"/><rect x="19" y="6.2" width="10.3" height="9.8" fill="#6382bf"/><path d="M19 7 H27.8 M19.8 6.2 V14.4" stroke="#333" stroke-width="1.6"/><rect x="21" y="8.2" width="6.4" height="5.9" fill="#f4f4f4"/><path d="M21.8 13.8 L31.2 4.4 M27.6 3.9 H31.7 V8" stroke="#111" stroke-width="1.2"/></svg>
<div style="left:74px;top:554px;width:1385px;height:264px;border:1px solid #7a8a99;background:#fff;"></div>
<div style="left:75px;top:554px;width:152px;height:21px;background:#eeeeee;border-right:1px solid #7a8a99;border-bottom:1px solid #7a8a99;border-top:1px solid #fff;border-left:1px solid #fff;"></div>
<div class="t" style="left:129.00px;top:557px;letter-spacing:0.217px;">Address</div>
<div style="left:227px;top:554px;width:152px;height:21px;background:#eeeeee;border-right:1px solid #7a8a99;border-bottom:1px solid #7a8a99;border-top:1px solid #fff;border-left:1px solid #fff;"></div>
<div class="t" style="left:276.25px;top:557px;letter-spacing:0.083px;">Value (+0)</div>
<div style="left:379px;top:554px;width:152px;height:21px;background:#eeeeee;border-right:1px solid #7a8a99;border-bottom:1px solid #7a8a99;border-top:1px solid #fff;border-left:1px solid #fff;"></div>
<div class="t" style="left:428.25px;top:557px;letter-spacing:0.083px;">Value (+4)</div>
<div style="left:531px;top:554px;width:152px;height:21px;background:#eeeeee;border-right:1px solid #7a8a99;border-bottom:1px solid #7a8a99;border-top:1px solid #fff;border-left:1px solid #fff;"></div>
<div class="t" style="left:580.25px;top:557px;letter-spacing:0.083px;">Value (+8)</div>
<div style="left:683px;top:554px;width:152px;height:21px;background:#eeeeee;border-right:1px solid #7a8a99;border-bottom:1px solid #7a8a99;border-top:1px solid #fff;border-left:1px solid #fff;"></div>
<div class="t" style="left:732.25px;top:557px;letter-spacing:0.153px;">Value (+c)</div>
<div style="left:835px;top:554px;width:152px;height:21px;background:#eeeeee;border-right:1px solid #7a8a99;border-bottom:1px solid #7a8a99;border-top:1px solid #fff;border-left:1px solid #fff;"></div>
<div class="t" style="left:880.75px;top:557px;letter-spacing:0.100px;">Value (+10)</div>
<div style="left:987px;top:554px;width:152px;height:21px;background:#eeeeee;border-right:1px solid #7a8a99;border-bottom:1px solid #7a8a99;border-top:1px solid #fff;border-left:1px solid #fff;"></div>
<div class="t" style="left:1032.75px;top:557px;letter-spacing:0.100px;">Value (+14)</div>
<div style="left:1139px;top:554px;width:152px;height:21px;background:#eeeeee;border-right:1px solid #7a8a99;border-bottom:1px solid #7a8a99;border-top:1px solid #fff;border-left:1px solid #fff;"></div>
<div class="t" style="left:1184.75px;top:557px;letter-spacing:0.100px;">Value (+18)</div>
<div style="left:1291px;top:554px;width:152px;height:21px;background:#eeeeee;border-right:1px solid #7a8a99;border-bottom:1px solid #7a8a99;border-top:1px solid #fff;border-left:1px solid #fff;"></div>
<div class="t" style="left:1336.75px;top:557px;letter-spacing:0.175px;">Value (+1c)</div>
<div style="left:1443px;top:554px;width:16px;height:21px;background:#eeeeee;border-left:1px solid #7a8a99;"></div>
<div style="left:227px;top:575px;width:1216px;height:15px;background:#e0e0e0;"></div>
<div style="left:75px;top:590px;width:1368px;height:1px;background:#7a8a99;"></div>
<div class="m g" style="left:75px;top:575px;width:150px;text-align:right;">0x10010000</div>
<div class="m" style="left:227px;top:575px;width:150px;text-align:right;">0x00000000</div>
<div class="m" style="left:379px;top:575px;width:150px;text-align:right;">0x00000000</div>
<div class="m" style="left:531px;top:575px;width:150px;text-align:right;">0x00000000</div>
<div class="m" style="left:683px;top:575px;width:150px;text-align:right;">0x00000000</div>
<div class="m" style="left:835px;top:575px;width:150px;text-align:right;">0x00000000</div>
<div class="m" style="left:987px;top:575px;width:150px;text-align:right;">0x00000000</div>
<div class="m" style="left:1139px;top:575px;width:150px;text-align:right;">0x00000000</div>
<div class="m" style="left:1291px;top:575px;width:150px;text-align:right;">0x00000000</div>
<div style="left:75px;top:606px;width:1368px;height:1px;background:#7a8a99;"></div>
<div class="m g" style="left:75px;top:591px;width:150px;text-align:right;">0x10010020</div>
<div class="m" style="left:227px;top:591px;width:150px;text-align:right;">0x00000000</div>
<div class="m" style="left:379px;top:591px;width:150px;text-align:right;">0x00000000</div>
<div class="m" style="left:531px;top:591px;width:150px;text-align:right;">0x00000000</div>
<div class="m" style="left:683px;top:591px;width:150px;text-align:right;">0x00000000</div>
<div class="m" style="left:835px;top:591px;width:150px;text-align:right;">0x00000000</div>
<div class="m" style="left:987px;top:591px;width:150px;text-align:right;">0x00000000</div>
<div class="m" style="left:1139px;top:591px;width:150px;text-align:right;">0x00000000</div>
<div class="m" style="left:1291px;top:591px;width:150px;text-align:right;">0x00000000</div>
<div style="left:227px;top:607px;width:1216px;height:15px;background:#e0e0e0;"></div>
<div style="left:75px;top:622px;width:1368px;height:1px;background:#7a8a99;"></div>
<div class="m g" style="left:75px;top:607px;width:150px;text-align:right;">0x10010040</div>
<div class="m" style="left:227px;top:607px;width:150px;text-align:right;">0x00000000</div>
<div class="m" style="left:379px;top:607px;width:150px;text-align:right;">0x00000000</div>
<div class="m" style="left:531px;top:607px;width:150px;text-align:right;">0x00000000</div>
<div class="m" style="left:683px;top:607px;width:150px;text-align:right;">0x00000000</div>
<div class="m" style="left:835px;top:607px;width:150px;text-align:right;">0x00000000</div>
<div class="m" style="left:987px;top:607px;width:150px;text-align:right;">0x00000000</div>
<div class="m" style="left:1139px;top:607px;width:150px;text-align:right;">0x00000000</div>
<div class="m" style="left:1291px;top:607px;width:150px;text-align:right;">0x00000000</div>
<div style="left:75px;top:638px;width:1368px;height:1px;background:#7a8a99;"></div>
<div class="m g" style="left:75px;top:623px;width:150px;text-align:right;">0x10010060</div>
<div class="m" style="left:227px;top:623px;width:150px;text-align:right;">0x00000000</div>
<div class="m" style="left:379px;top:623px;width:150px;text-align:right;">0x00000000</div>
<div class="m" style="left:531px;top:623px;width:150px;text-align:right;">0x00000000</div>
<div class="m" style="left:683px;top:623px;width:150px;text-align:right;">0x00000000</div>
<div class="m" style="left:835px;top:623px;width:150px;text-align:right;">0x00000000</div>
<div class="m" style="left:987px;top:623px;width:150px;text-align:right;">0x00000000</div>
<div class="m" style="left:1139px;top:623px;width:150px;text-align:right;">0x00000000</div>
<div class="m" style="left:1291px;top:623px;width:150px;text-align:right;">0x00000000</div>
<div style="left:227px;top:639px;width:1216px;height:15px;background:#e0e0e0;"></div>
<div style="left:75px;top:654px;width:1368px;height:1px;background:#7a8a99;"></div>
<div class="m g" style="left:75px;top:639px;width:150px;text-align:right;">0x10010080</div>
<div class="m" style="left:227px;top:639px;width:150px;text-align:right;">0x00000000</div>
<div class="m" style="left:379px;top:639px;width:150px;text-align:right;">0x00000000</div>
<div class="m" style="left:531px;top:639px;width:150px;text-align:right;">0x00000000</div>
<div class="m" style="left:683px;top:639px;width:150px;text-align:right;">0x00000000</div>
<div class="m" style="left:835px;top:639px;width:150px;text-align:right;">0x00000000</div>
<div class="m" style="left:987px;top:639px;width:150px;text-align:right;">0x00000000</div>
<div class="m" style="left:1139px;top:639px;width:150px;text-align:right;">0x00000000</div>
<div class="m" style="left:1291px;top:639px;width:150px;text-align:right;">0x00000000</div>
<div style="left:75px;top:670px;width:1368px;height:1px;background:#7a8a99;"></div>
<div class="m g" style="left:75px;top:655px;width:150px;text-align:right;">0x100100a0</div>
<div class="m" style="left:227px;top:655px;width:150px;text-align:right;">0x00000000</div>
<div class="m" style="left:379px;top:655px;width:150px;text-align:right;">0x00000000</div>
<div class="m" style="left:531px;top:655px;width:150px;text-align:right;">0x00000000</div>
<div class="m" style="left:683px;top:655px;width:150px;text-align:right;">0x00000000</div>
<div class="m" style="left:835px;top:655px;width:150px;text-align:right;">0x00000000</div>
<div class="m" style="left:987px;top:655px;width:150px;text-align:right;">0x00000000</div>
<div class="m" style="left:1139px;top:655px;width:150px;text-align:right;">0x00000000</div>
<div class="m" style="left:1291px;top:655px;width:150px;text-align:right;">0x00000000</div>
<div style="left:227px;top:671px;width:1216px;height:15px;background:#e0e0e0;"></div>
<div style="left:75px;top:686px;width:1368px;height:1px;background:#7a8a99;"></div>
<div class="m g" style="left:75px;top:671px;width:150px;text-align:right;">0x100100c0</div>
<div class="m" style="left:227px;top:671px;width:150px;text-align:right;">0x00000000</div>
<div class="m" style="left:379px;top:671px;width:150px;text-align:right;">0x00000000</div>
<div class="m" style="left:531px;top:671px;width:150px;text-align:right;">0x00000000</div>
<div class="m" style="left:683px;top:671px;width:150px;text-align:right;">0x00000000</div>
<div class="m" style="left:835px;top:671px;width:150px;text-align:right;">0x00000000</div>
<div class="m" style="left:987px;top:671px;width:150px;text-align:right;">0x00000000</div>
<div class="m" style="left:1139px;top:671px;width:150px;text-align:right;">0x00000000</div>
<div class="m" style="left:1291px;top:671px;width:150px;text-align:right;">0x00000000</div>
<div style="left:75px;top:702px;width:1368px;height:1px;background:#7a8a99;"></div>
<div class="m g" style="left:75px;top:687px;width:150px;text-align:right;">0x100100e0</div>
<div class="m" style="left:227px;top:687px;width:150px;text-align:right;">0x00000000</div>
<div class="m" style="left:379px;top:687px;width:150px;text-align:right;">0x00000000</div>
<div class="m" style="left:531px;top:687px;width:150px;text-align:right;">0x00000000</div>
<div class="m" style="left:683px;top:687px;width:150px;text-align:right;">0x00000000</div>
<div class="m" style="left:835px;top:687px;width:150px;text-align:right;">0x00000000</div>
<div class="m" style="left:987px;top:687px;width:150px;text-align:right;">0x00000000</div>
<div class="m" style="left:1139px;top:687px;width:150px;text-align:right;">0x00000000</div>
<div class="m" style="left:1291px;top:687px;width:150px;text-align:right;">0x00000000</div>
<div style="left:227px;top:703px;width:1216px;height:15px;background:#e0e0e0;"></div>
<div style="left:75px;top:718px;width:1368px;height:1px;background:#7a8a99;"></div>
<div class="m g" style="left:75px;top:703px;width:150px;text-align:right;">0x10010100</div>
<div class="m" style="left:227px;top:703px;width:150px;text-align:right;">0x00000000</div>
<div class="m" style="left:379px;top:703px;width:150px;text-align:right;">0x00000000</div>
<div class="m" style="left:531px;top:703px;width:150px;text-align:right;">0x00000000</div>
<div class="m" style="left:683px;top:703px;width:150px;text-align:right;">0x00000000</div>
<div class="m" style="left:835px;top:703px;width:150px;text-align:right;">0x00000000</div>
<div class="m" style="left:987px;top:703px;width:150px;text-align:right;">0x00000000</div>
<div class="m" style="left:1139px;top:703px;width:150px;text-align:right;">0x00000000</div>
<div class="m" style="left:1291px;top:703px;width:150px;text-align:right;">0x00000000</div>
<div style="left:75px;top:734px;width:1368px;height:1px;background:#7a8a99;"></div>
<div class="m g" style="left:75px;top:719px;width:150px;text-align:right;">0x10010120</div>
<div class="m" style="left:227px;top:719px;width:150px;text-align:right;">0x00000000</div>
<div class="m" style="left:379px;top:719px;width:150px;text-align:right;">0x00000000</div>
<div class="m" style="left:531px;top:719px;width:150px;text-align:right;">0x00000000</div>
<div class="m" style="left:683px;top:719px;width:150px;text-align:right;">0x00000000</div>
<div class="m" style="left:835px;top:719px;width:150px;text-align:right;">0x00000000</div>
<div class="m" style="left:987px;top:719px;width:150px;text-align:right;">0x00000000</div>
<div class="m" style="left:1139px;top:719px;width:150px;text-align:right;">0x00000000</div>
<div class="m" style="left:1291px;top:719px;width:150px;text-align:right;">0x00000000</div>
<div style="left:227px;top:735px;width:1216px;height:15px;background:#e0e0e0;"></div>
<div style="left:75px;top:750px;width:1368px;height:1px;background:#7a8a99;"></div>
<div class="m g" style="left:75px;top:735px;width:150px;text-align:right;">0x10010140</div>
<div class="m" style="left:227px;top:735px;width:150px;text-align:right;">0x00000000</div>
<div class="m" style="left:379px;top:735px;width:150px;text-align:right;">0x00000000</div>
<div class="m" style="left:531px;top:735px;width:150px;text-align:right;">0x00000000</div>
<div class="m" style="left:683px;top:735px;width:150px;text-align:right;">0x00000000</div>
<div class="m" style="left:835px;top:735px;width:150px;text-align:right;">0x00000000</div>
<div class="m" style="left:987px;top:735px;width:150px;text-align:right;">0x00000000</div>
<div class="m" style="left:1139px;top:735px;width:150px;text-align:right;">0x00000000</div>
<div class="m" style="left:1291px;top:735px;width:150px;text-align:right;">0x00000000</div>
<div style="left:75px;top:766px;width:1368px;height:1px;background:#7a8a99;"></div>
<div class="m g" style="left:75px;top:751px;width:150px;text-align:right;">0x10010160</div>
<div class="m" style="left:227px;top:751px;width:150px;text-align:right;">0x00000000</div>
<div class="m" style="left:379px;top:751px;width:150px;text-align:right;">0x00000000</div>
<div class="m" style="left:531px;top:751px;width:150px;text-align:right;">0x00000000</div>
<div class="m" style="left:683px;top:751px;width:150px;text-align:right;">0x00000000</div>
<div class="m" style="left:835px;top:751px;width:150px;text-align:right;">0x00000000</div>
<div class="m" style="left:987px;top:751px;width:150px;text-align:right;">0x00000000</div>
<div class="m" style="left:1139px;top:751px;width:150px;text-align:right;">0x00000000</div>
<div class="m" style="left:1291px;top:751px;width:150px;text-align:right;">0x00000000</div>
<div style="left:227px;top:767px;width:1216px;height:15px;background:#e0e0e0;"></div>
<div style="left:75px;top:782px;width:1368px;height:1px;background:#7a8a99;"></div>
<div class="m g" style="left:75px;top:767px;width:150px;text-align:right;">0x10010180</div>
<div class="m" style="left:227px;top:767px;width:150px;text-align:right;">0x00000000</div>
<div class="m" style="left:379px;top:767px;width:150px;text-align:right;">0x00000000</div>
<div class="m" style="left:531px;top:767px;width:150px;text-align:right;">0x00000000</div>
<div class="m" style="left:683px;top:767px;width:150px;text-align:right;">0x00000000</div>
<div class="m" style="left:835px;top:767px;width:150px;text-align:right;">0x00000000</div>
<div class="m" style="left:987px;top:767px;width:150px;text-align:right;">0x00000000</div>
<div class="m" style="left:1139px;top:767px;width:150px;text-align:right;">0x00000000</div>
<div class="m" style="left:1291px;top:767px;width:150px;text-align:right;">0x00000000</div>
<div style="left:75px;top:798px;width:1368px;height:1px;background:#7a8a99;"></div>
<div class="m g" style="left:75px;top:783px;width:150px;text-align:right;">0x100101a0</div>
<div class="m" style="left:227px;top:783px;width:150px;text-align:right;">0x00000000</div>
<div class="m" style="left:379px;top:783px;width:150px;text-align:right;">0x00000000</div>
<div class="m" style="left:531px;top:783px;width:150px;text-align:right;">0x00000000</div>
<div class="m" style="left:683px;top:783px;width:150px;text-align:right;">0x00000000</div>
<div class="m" style="left:835px;top:783px;width:150px;text-align:right;">0x00000000</div>
<div class="m" style="left:987px;top:783px;width:150px;text-align:right;">0x00000000</div>
<div class="m" style="left:1139px;top:783px;width:150px;text-align:right;">0x00000000</div>
<div class="m" style="left:1291px;top:783px;width:150px;text-align:right;">0x00000000</div>
<div style="left:227px;top:799px;width:1216px;height:2px;background:#e0e0e0;"></div>
<div style="left:226px;top:575px;width:1px;height:227px;background:#7a8a99;"></div>
<div style="left:378px;top:575px;width:1px;height:227px;background:#7a8a99;"></div>
<div style="left:530px;top:575px;width:1px;height:227px;background:#7a8a99;"></div>
<div style="left:682px;top:575px;width:1px;height:227px;background:#7a8a99;"></div>
<div style="left:834px;top:575px;width:1px;height:227px;background:#7a8a99;"></div>
<div style="left:986px;top:575px;width:1px;height:227px;background:#7a8a99;"></div>
<div style="left:1138px;top:575px;width:1px;height:227px;background:#7a8a99;"></div>
<div style="left:1290px;top:575px;width:1px;height:227px;background:#7a8a99;"></div>
<div style="left:1442px;top:575px;width:1px;height:227px;background:#7a8a99;"></div>
<div style="left:1459px;top:554px;width:1px;height:265px;background:#fff;"></div>
<div style="left:74px;top:818px;width:1386px;height:1px;background:#fff;"></div>
<div style="left:1443px;top:575px;width:15px;height:227px;background:#eeeeee;border-left:1px solid #7a8a99;"></div>
<div style="left:1444px;top:575px;width:14px;height:1px;background:#fff;"></div>
<div style="left:1444px;top:575px;width:1px;height:15px;background:#fff;"></div>
<div style="left:1444px;top:590px;width:14px;height:1px;background:#7a8a99;"></div>
<div style="left:1444px;top:591px;width:14px;height:1px;background:#c8ddf2;"></div>
<div style="left:1444px;top:591px;width:1px;height:195px;background:#c8ddf2;"></div>
<svg style="left:1443px;top:574px" width="15" height="16" viewBox="0 0 15 16"><path d="M3.5 10.0 L7.5 6.0 L11.5 10.0 Z" fill="#222"/></svg>
<div style="left:1444px;top:786px;width:14px;height:1px;background:#7a8a99;"></div>
<div style="left:1444px;top:787px;width:14px;height:1px;background:#fff;"></div>
<div style="left:1444px;top:787px;width:1px;height:14px;background:#fff;"></div>
<div style="left:1444px;top:801px;width:14px;height:1px;background:#7a8a99;"></div>
<svg style="left:1443px;top:786px" width="15" height="16" viewBox="0 0 15 16"><path d="M3.5 6.0 L7.5 10.0 L11.5 6.0 Z" fill="#222"/></svg>
<div class="gradh" style="left:1443px;top:590px;width:15px;height:174px;border:1px solid #6382bf;border-right:none;"></div>
<div style="left:1444px;top:591px;width:14px;height:172px;border-left:1px solid #fff;border-top:1px solid #fff;"></div>
<div style="left:1447px;top:675px;width:9px;height:1px;background:#6382bf;"></div>
<div style="left:1448px;top:676px;width:9px;height:1px;background:#fff;"></div>
<div style="left:1447px;top:677px;width:9px;height:1px;background:#6382bf;"></div>
<div style="left:1448px;top:678px;width:9px;height:1px;background:#fff;"></div>
<div style="left:1447px;top:679px;width:9px;height:1px;background:#6382bf;"></div>
<div style="left:1448px;top:680px;width:9px;height:1px;background:#fff;"></div>
<div style="left:75px;top:802px;width:1368px;height:15px;background:#eeeeee;border-top:1px solid #7a8a99;"></div>
<svg style="left:75px;top:803px" width="14" height="14" viewBox="0 0 14 14"><path d="M9.0 3.0 L5.0 7.0 L9.0 11.0 Z" fill="#222"/></svg>
<svg style="left:1428px;top:803px" width="15" height="14" viewBox="0 0 15 14"><path d="M5.5 3.0 L9.5 7.0 L5.5 11.0 Z" fill="#222"/></svg>
<div style="left:90px;top:803px;width:1px;height:14px;background:#7a8a99;"></div>
<div style="left:1427px;top:803px;width:1px;height:14px;background:#7a8a99;"></div>
<div style="left:1442px;top:803px;width:1px;height:14px;background:#7a8a99;"></div>
<div style="left:91px;top:803px;width:1px;height:14px;background:#fff;"></div>
<div style="left:1428px;top:803px;width:1px;height:14px;background:#fff;"></div>
<div style="left:75px;top:803px;width:15px;height:1px;background:#fff;"></div>
<div style="left:75px;top:803px;width:1px;height:14px;background:#fff;"></div>
<div style="left:1443px;top:802px;width:15px;height:15px;background:#eeeeee;"></div>
<div class="grad" style="left:446px;top:824px;width:50px;height:26px;border:1px solid #7a8a99;"></div>
<div style="left:447px;top:825px;width:48px;height:24px;border:1px solid #fff;border-right:none;border-bottom:none;"></div>
<svg style="left:461px;top:829px" width="21" height="16" viewBox="0 0 21 16"><g><path d="M2 8 L10.2 0.6 V4.6 H17.6 V11.4 H10.2 V15.4 Z" fill="url(#ggr)" stroke="#3d8c1c" stroke-width="1"/></g></svg>
<div class="grad" style="left:496px;top:824px;width:50px;height:26px;border:1px solid #7a8a99;"></div>
<div style="left:497px;top:825px;width:48px;height:24px;border:1px solid #fff;border-right:none;border-bottom:none;"></div>
<svg style="left:511px;top:829px" width="21" height="16" viewBox="0 0 21 16"><g transform="translate(21 0) scale(-1 1)"><path d="M2 8 L10.2 0.6 V4.6 H17.6 V11.4 H10.2 V15.4 Z" fill="url(#ggr)" stroke="#3d8c1c" stroke-width="1"/></g></svg>
<div style="left:551px;top:824px;width:151px;height:26px;border:1px solid #7a8a99;background:#eeeeee;"></div>
<div style="left:552px;top:825px;width:130px;height:24px;border:1px solid #b8cfe5;"></div>
<div class="grad" style="left:682px;top:825px;width:19px;height:24px;"></div>
<div style="left:682px;top:825px;width:1px;height:24px;background:#7a8a99;"></div>
<div style="left:683px;top:825px;width:1px;height:24px;background:#fff;"></div>
<div style="left:683px;top:825px;width:18px;height:1px;background:#fff;"></div>
<svg style="left:683px;top:825px" width="19" height="24" viewBox="0 0 19 24"><path d="M4.5 10 h9 l-4.5 5 z" fill="#222"/></svg>
<div class="b" style="left:554.20px;top:829px;letter-spacing:0.257px;">0x10010000 (.data)</div>
<div style="left:711px;top:830px;width:13px;height:13px;border:1px solid #7a8a99;background:linear-gradient(135deg,#ffffff 0%,#dde8f3 45%,#b8cfe5 100%);"></div>
<svg style="left:711px;top:830px" width="13" height="13" viewBox="0 0 13 13"><rect x="3" y="5" width="2" height="5" fill="#2a2a2a"/><path d="M9.7 3.3 L5 8 M9.7 4.4 L5 9.1" fill="none" stroke="#2a2a2a" stroke-width="1.1"/></svg>
<div class="b" style="left:728.20px;top:829px;letter-spacing:0.199px;">Hexadecimal Addresses</div>
<div style="left:883px;top:830px;width:13px;height:13px;border:1px solid #7a8a99;background:linear-gradient(135deg,#ffffff 0%,#dde8f3 45%,#b8cfe5 100%);"></div>
<svg style="left:883px;top:830px" width="13" height="13" viewBox="0 0 13 13"><rect x="3" y="5" width="2" height="5" fill="#2a2a2a"/><path d="M9.7 3.3 L5 8 M9.7 4.4 L5 9.1" fill="none" stroke="#2a2a2a" stroke-width="1.1"/></svg>
<div class="b" style="left:900.40px;top:829px;letter-spacing:0.315px;">Hexadecimal Values</div>
<div style="left:1034px;top:830px;width:13px;height:13px;border:1px solid #7a8a99;background:linear-gradient(135deg,#ffffff 0%,#dde8f3 45%,#b8cfe5 100%);"></div>
<div class="b" style="left:1050.80px;top:829px;letter-spacing:0.125px;">ASCII</div>
<div style="left:67px;top:863px;width:1401px;height:1px;background:#fff;"></div>
<div style="left:67px;top:864px;width:1401px;height:8px;background:#f0f0f0;"></div>
<svg style="left:77px;top:866px" width="1388" height="4" shape-rendering="crispEdges"><rect width="1388" height="4" fill="url(#bp)"/></svg>
<svg style="left:68px;top:863px" width="26" height="9" viewBox="0 0 26 9"><path d="M2 6 L6 2 L10 6 Z M14 2.2 L18 6.2 L22 2.2 Z" fill="#6382bf"/><path d="M2 6 L6 2 M14 2.2 H22" stroke="#222" stroke-width="0.9" fill="none"/></svg>
<div style="left:67px;top:872px;width:1401px;height:1px;background:#7a8a99;"></div>
<div style="left:67px;top:895px;width:1401px;height:192px;background:#eeeeee;border:1px solid #6382bf;border-right-color:#7a8a99;border-bottom-color:#7a8a99;"></div>
<div style="left:68px;top:896px;width:1399px;height:1px;background:#fff;"></div>
<svg style="left:69px;top:875px" width="112" height="20" viewBox="0 0 112 20"><path d="M0.5 20 V6.5 L6.5 0.5 H111.5 V20 Z" fill="#eeeeee" stroke="none"/><path d="M1.5 20 V7 L7 1.5 H111" fill="none" stroke="#fff" stroke-width="1"/><path d="M0.5 20 V6.5 L6.5 0.5 H111.5 V20" fill="none" stroke="#7a8a99" stroke-width="1"/></svg>
<div class="b" style="left:79.30px;top:878px;letter-spacing:0.038px;">Mars Messages</div>
<svg style="left:181px;top:875px" width="67" height="21" viewBox="0 0 67 21"><path d="M0.5 21 V6.5 L6.5 0.5 H66.5 V21 Z" fill="#c8ddf2" stroke="none"/><path d="M1.5 21 V7 L7 1.5 H66" fill="none" stroke="#fff" stroke-width="1"/><path d="M0.5 21 V6.5 L6.5 0.5 H66.5 V21" fill="none" stroke="#6382bf" stroke-width="1"/></svg>
<div class="b" style="left:191.80px;top:878px;letter-spacing:0.496px;">Run I/O</div>
<div style="left:182px;top:895px;width:65px;height:2px;background:#c8ddf2;"></div>
<div style="left:68px;top:897px;width:1399px;height:2px;background:#c8ddf2;"></div>
<div style="left:68px;top:897px;width:1px;height:189px;background:#c8ddf2;"></div>
<div style="left:68px;top:1084px;width:1399px;height:2px;background:#c8ddf2;"></div>
<div style="left:1465px;top:897px;width:2px;height:189px;background:#c8ddf2;"></div>
<div class="grad" style="left:75px;top:976px;width:65px;height:27px;border:1px solid #7a8a99;"></div>
<div style="left:76px;top:977px;width:63px;height:25px;border:1px solid #fff;border-right:none;border-bottom:none;"></div>
<div class="b" style="left:92.30px;top:982px;letter-spacing:0.175px;">Clear</div>
<div style="left:146px;top:899px;width:1318px;height:184px;border:1px solid #7a8a99;background:#fff;"></div>
<div style="left:1464px;top:899px;width:1px;height:185px;background:#fff;"></div>
<div style="left:146px;top:1083px;width:1319px;height:1px;background:#fff;"></div>
<div class="m" style="left:147.5px;top:930px;color:#222;">-- program is finished running (dropped off bottom) --</div>
<div class="m" style="left:147.5px;top:981px;color:#222;">-- program is finished running (dropped off bottom) --</div>
<div class="m" style="left:147.5px;top:1032px;color:#222;">-- program is finished running (dropped off bottom) --</div>
<div style="left:1448px;top:900px;width:15px;height:182px;background:#eeeeee;border-left:1px solid #7a8a99;"></div>
<div style="left:1449px;top:900px;width:14px;height:1px;background:#fff;"></div>
<div style="left:1449px;top:900px;width:1px;height:15px;background:#fff;"></div>
<div style="left:1449px;top:915px;width:14px;height:1px;background:#7a8a99;"></div>
<div style="left:1449px;top:916px;width:14px;height:1px;background:#c8ddf2;"></div>
<div style="left:1449px;top:916px;width:1px;height:150px;background:#c8ddf2;"></div>
<svg style="left:1448px;top:899px" width="15" height="16" viewBox="0 0 15 16"><path d="M3.5 10.0 L7.5 6.0 L11.5 10.0 Z" fill="#222"/></svg>
<div style="left:1449px;top:1066px;width:14px;height:1px;background:#7a8a99;"></div>
<div style="left:1449px;top:1067px;width:14px;height:1px;background:#fff;"></div>
<div style="left:1449px;top:1067px;width:1px;height:14px;background:#fff;"></div>
<div style="left:1449px;top:1081px;width:14px;height:1px;background:#7a8a99;"></div>
<svg style="left:1448px;top:1066px" width="15" height="16" viewBox="0 0 15 16"><path d="M3.5 6.0 L7.5 10.0 L11.5 6.0 Z" fill="#222"/></svg>
<div class="gradh" style="left:1448px;top:942px;width:15px;height:125px;border:1px solid #6382bf;border-right:none;"></div>
<div style="left:1449px;top:943px;width:14px;height:123px;border-left:1px solid #fff;border-top:1px solid #fff;"></div>
<div style="left:1452px;top:1003px;width:9px;height:1px;background:#6382bf;"></div>
<div style="left:1453px;top:1004px;width:9px;height:1px;background:#fff;"></div>
<div style="left:1452px;top:1005px;width:9px;height:1px;background:#6382bf;"></div>
<div style="left:1453px;top:1006px;width:9px;height:1px;background:#fff;"></div>
<div style="left:1452px;top:1007px;width:9px;height:1px;background:#6382bf;"></div>
<div style="left:1453px;top:1008px;width:9px;height:1px;background:#fff;"></div>
<div style="left:1478px;top:159px;width:507px;height:930px;border-top:1px solid #7a8a99;border-left:1px solid #7a8a99;border-right:1px solid #fff;border-bottom:1px solid #fff;"></div>
<svg style="left:1472px;top:170px" width="4" height="916" shape-rendering="crispEdges"><rect width="4" height="916" fill="url(#bp)"/></svg>
<svg style="left:1470px;top:162px" width="9" height="24" viewBox="0 0 9 24"><path d="M5.2 1.2 L1.2 5.2 L5.2 9.2 Z M1.2 13 L5.2 17 L1.2 21 Z" fill="#6382bf"/><path d="M5.2 1.2 L1.2 5.2 M1.2 13 V21" stroke="#222" stroke-width="0.9" fill="none"/></svg>
<div style="left:1479px;top:182px;width:505px;height:906px;background:#c8ddf2;border:1px solid #6382bf;border-right-color:#7a8a99;border-bottom-color:#7a8a99;"></div>
<div style="left:1480px;top:183px;width:503px;height:1px;background:#fff;"></div>
<div style="left:1480px;top:183px;width:1px;height:904px;background:#fff;"></div>
<div style="left:1980px;top:186px;width:1px;height:899px;background:#fff;"></div>
<div style="left:1481px;top:1084px;width:500px;height:1px;background:#fff;"></div>
<svg style="left:1481px;top:162px" width="78" height="21" viewBox="0 0 78 21"><path d="M0.5 21 V6.5 L6.5 0.5 H77.5 V21 Z" fill="#c8ddf2" stroke="none"/><path d="M1.5 21 V7 L7 1.5 H77" fill="none" stroke="#fff" stroke-width="1"/><path d="M0.5 21 V6.5 L6.5 0.5 H77.5 V21" fill="none" stroke="#6382bf" stroke-width="1"/></svg>
<div class="b" style="left:1491.50px;top:165px;letter-spacing:0.031px;">Registers</div>
<div style="left:1482px;top:182px;width:76px;height:2px;background:#c8ddf2;"></div>
<svg style="left:1559px;top:162px" width="72" height="20" viewBox="0 0 72 20"><path d="M0.5 20 V6.5 L6.5 0.5 H71.5 V20 Z" fill="#eeeeee" stroke="none"/><path d="M1.5 20 V7 L7 1.5 H71" fill="none" stroke="#fff" stroke-width="1"/><path d="M0.5 20 V6.5 L6.5 0.5 H71.5 V20" fill="none" stroke="#7a8a99" stroke-width="1"/></svg>
<div class="b" style="left:1569.50px;top:165px;letter-spacing:-0.429px;">Coproc 1</div>
<svg style="left:1631px;top:162px" width="71" height="20" viewBox="0 0 71 20"><path d="M0.5 20 V6.5 L6.5 0.5 H70.5 V20 Z" fill="#eeeeee" stroke="none"/><path d="M1.5 20 V7 L7 1.5 H70" fill="none" stroke="#fff" stroke-width="1"/><path d="M0.5 20 V6.5 L6.5 0.5 H70.5 V20" fill="none" stroke="#7a8a99" stroke-width="1"/></svg>
<div class="b" style="left:1641.50px;top:165px;letter-spacing:-0.286px;">Coproc 0</div>
<div style="left:1481px;top:186px;width:499px;height:898px;border:1px solid #7a8a99;background:#eeeeee;"></div>
<div style="left:1482px;top:187px;width:154px;height:21px;background:#eeeeee;border-right:1px solid #7a8a99;border-bottom:1px solid #7a8a99;border-top:1px solid #fff;border-left:1px solid #fff;"></div>
<div class="t" style="left:1543.50px;top:190px;letter-spacing:0.333px;">Name</div>
<div style="left:1636px;top:187px;width:154px;height:21px;background:#eeeeee;border-right:1px solid #7a8a99;border-bottom:1px solid #7a8a99;border-top:1px solid #fff;border-left:1px solid #fff;"></div>
<div class="t" style="left:1691.50px;top:190px;letter-spacing:0.475px;">Number</div>
<div style="left:1790px;top:187px;width:189px;height:21px;background:#eeeeee;border-right:1px solid #7a8a99;border-bottom:1px solid #7a8a99;border-top:1px solid #fff;border-left:1px solid #fff;"></div>
<div class="t" style="left:1869.50px;top:190px;letter-spacing:0.312px;">Value</div>
<div style="left:1482px;top:208px;width:497px;height:15px;background:#e0e0e0;"></div>
<div style="left:1482px;top:223px;width:497px;height:1px;background:#7a8a99;"></div>
<div class="m" style="left:1483px;top:208px;">$zero</div>
<div class="m" style="left:1636px;top:208px;width:151.5px;text-align:right;">0</div>
<div class="m" style="left:1790px;top:208px;width:187px;text-align:right;">0x00000000</div>
<div style="left:1482px;top:224px;width:497px;height:15px;background:#99cc55;"></div>
<div style="left:1482px;top:239px;width:497px;height:1px;background:#7a8a99;"></div>
<div class="m" style="left:1483px;top:224px;">$at</div>
<div class="m" style="left:1636px;top:224px;width:151.5px;text-align:right;">1</div>
<div class="m" style="left:1790px;top:224px;width:187px;text-align:right;">0x00000000</div>
<div style="left:1482px;top:240px;width:497px;height:15px;background:#e0e0e0;"></div>
<div style="left:1482px;top:255px;width:497px;height:1px;background:#7a8a99;"></div>
<div class="m" style="left:1483px;top:240px;">$v0</div>
<div class="m" style="left:1636px;top:240px;width:151.5px;text-align:right;">2</div>
<div class="m" style="left:1790px;top:240px;width:187px;text-align:right;">0x00000000</div>
<div style="left:1482px;top:256px;width:497px;height:15px;background:#fff;"></div>
<div style="left:1482px;top:271px;width:497px;height:1px;background:#7a8a99;"></div>
<div class="m" style="left:1483px;top:256px;">$v1</div>
<div class="m" style="left:1636px;top:256px;width:151.5px;text-align:right;">3</div>
<div class="m" style="left:1790px;top:256px;width:187px;text-align:right;">0x00000000</div>
<div style="left:1482px;top:272px;width:497px;height:15px;background:#e0e0e0;"></div>
<div style="left:1482px;top:287px;width:497px;height:1px;background:#7a8a99;"></div>
<div class="m" style="left:1483px;top:272px;">$a0</div>
<div class="m" style="left:1636px;top:272px;width:151.5px;text-align:right;">4</div>
<div class="m" style="left:1790px;top:272px;width:187px;text-align:right;">0x00000000</div>
<div style="left:1482px;top:288px;width:497px;height:15px;background:#fff;"></div>
<div style="left:1482px;top:303px;width:497px;height:1px;background:#7a8a99;"></div>
<div class="m" style="left:1483px;top:288px;">$a1</div>
<div class="m" style="left:1636px;top:288px;width:151.5px;text-align:right;">5</div>
<div class="m" style="left:1790px;top:288px;width:187px;text-align:right;">0x00000000</div>
<div style="left:1482px;top:304px;width:497px;height:15px;background:#e0e0e0;"></div>
<div style="left:1482px;top:319px;width:497px;height:1px;background:#7a8a99;"></div>
<div class="m" style="left:1483px;top:304px;">$a2</div>
<div class="m" style="left:1636px;top:304px;width:151.5px;text-align:right;">6</div>
<div class="m" style="left:1790px;top:304px;width:187px;text-align:right;">0x00000000</div>
<div style="left:1482px;top:320px;width:497px;height:15px;background:#fff;"></div>
<div style="left:1482px;top:335px;width:497px;height:1px;background:#7a8a99;"></div>
<div class="m" style="left:1483px;top:320px;">$a3</div>
<div class="m" style="left:1636px;top:320px;width:151.5px;text-align:right;">7</div>
<div class="m" style="left:1790px;top:320px;width:187px;text-align:right;">0x00000000</div>
<div style="left:1482px;top:336px;width:497px;height:15px;background:#e0e0e0;"></div>
<div style="left:1482px;top:351px;width:497px;height:1px;background:#7a8a99;"></div>
<div class="m" style="left:1483px;top:336px;">$t0</div>
<div class="m" style="left:1636px;top:336px;width:151.5px;text-align:right;">8</div>
<div class="m" style="left:1790px;top:336px;width:187px;text-align:right;">0x00000004</div>
<div style="left:1482px;top:352px;width:497px;height:15px;background:#fff;"></div>
<div style="left:1482px;top:367px;width:497px;height:1px;background:#7a8a99;"></div>
<div class="m" style="left:1483px;top:352px;">$t1</div>
<div class="m" style="left:1636px;top:352px;width:151.5px;text-align:right;">9</div>
<div class="m" style="left:1790px;top:352px;width:187px;text-align:right;">0x00000002</div>
<div style="left:1482px;top:368px;width:497px;height:15px;background:#e0e0e0;"></div>
<div style="left:1482px;top:383px;width:497px;height:1px;background:#7a8a99;"></div>
<div class="m" style="left:1483px;top:368px;">$t2</div>
<div class="m" style="left:1636px;top:368px;width:151.5px;text-align:right;">10</div>
<div class="m" style="left:1790px;top:368px;width:187px;text-align:right;">0x00000004</div>
<div style="left:1482px;top:384px;width:497px;height:15px;background:#fff;"></div>
<div style="left:1482px;top:399px;width:497px;height:1px;background:#7a8a99;"></div>
<div class="m" style="left:1483px;top:384px;">$t3</div>
<div class="m" style="left:1636px;top:384px;width:151.5px;text-align:right;">11</div>
<div class="m" style="left:1790px;top:384px;width:187px;text-align:right;">0x00000000</div>
<div style="left:1482px;top:400px;width:497px;height:15px;background:#e0e0e0;"></div>
<div style="left:1482px;top:415px;width:497px;height:1px;background:#7a8a99;"></div>
<div class="m" style="left:1483px;top:400px;">$t4</div>
<div class="m" style="left:1636px;top:400px;width:151.5px;text-align:right;">12</div>
<div class="m" style="left:1790px;top:400px;width:187px;text-align:right;">0x00000000</div>
<div style="left:1482px;top:416px;width:497px;height:15px;background:#fff;"></div>
<div style="left:1482px;top:431px;width:497px;height:1px;background:#7a8a99;"></div>
<div class="m" style="left:1483px;top:416px;">$t5</div>
<div class="m" style="left:1636px;top:416px;width:151.5px;text-align:right;">13</div>
<div class="m" style="left:1790px;top:416px;width:187px;text-align:right;">0x00000000</div>
<div style="left:1482px;top:432px;width:497px;height:15px;background:#e0e0e0;"></div>
<div style="left:1482px;top:447px;width:497px;height:1px;background:#7a8a99;"></div>
<div class="m" style="left:1483px;top:432px;">$t6</div>
<div class="m" style="left:1636px;top:432px;width:151.5px;text-align:right;">14</div>
<div class="m" style="left:1790px;top:432px;width:187px;text-align:right;">0x00000000</div>
<div style="left:1482px;top:448px;width:497px;height:15px;background:#fff;"></div>
<div style="left:1482px;top:463px;width:497px;height:1px;background:#7a8a99;"></div>
<div class="m" style="left:1483px;top:448px;">$t7</div>
<div class="m" style="left:1636px;top:448px;width:151.5px;text-align:right;">15</div>
<div class="m" style="left:1790px;top:448px;width:187px;text-align:right;">0x00000000</div>
<div style="left:1482px;top:464px;width:497px;height:15px;background:#e0e0e0;"></div>
<div style="left:1482px;top:479px;width:497px;height:1px;background:#7a8a99;"></div>
<div class="m" style="left:1483px;top:464px;">$s0</div>
<div class="m" style="left:1636px;top:464px;width:151.5px;text-align:right;">16</div>
<div class="m" style="left:1790px;top:464px;width:187px;text-align:right;">0x00000000</div>
<div style="left:1482px;top:480px;width:497px;height:15px;background:#fff;"></div>
<div style="left:1482px;top:495px;width:497px;height:1px;background:#7a8a99;"></div>
<div class="m" style="left:1483px;top:480px;">$s1</div>
<div class="m" style="left:1636px;top:480px;width:151.5px;text-align:right;">17</div>
<div class="m" style="left:1790px;top:480px;width:187px;text-align:right;">0x00000000</div>
<div style="left:1482px;top:496px;width:497px;height:15px;background:#e0e0e0;"></div>
<div style="left:1482px;top:511px;width:497px;height:1px;background:#7a8a99;"></div>
<div class="m" style="left:1483px;top:496px;">$s2</div>
<div class="m" style="left:1636px;top:496px;width:151.5px;text-align:right;">18</div>
<div class="m" style="left:1790px;top:496px;width:187px;text-align:right;">0x00000000</div>
<div style="left:1482px;top:512px;width:497px;height:15px;background:#fff;"></div>
<div style="left:1482px;top:527px;width:497px;height:1px;background:#7a8a99;"></div>
<div class="m" style="left:1483px;top:512px;">$s3</div>
<div class="m" style="left:1636px;top:512px;width:151.5px;text-align:right;">19</div>
<div class="m" style="left:1790px;top:512px;width:187px;text-align:right;">0x00000000</div>
<div style="left:1482px;top:528px;width:497px;height:15px;background:#e0e0e0;"></div>
<div style="left:1482px;top:543px;width:497px;height:1px;background:#7a8a99;"></div>
<div class="m" style="left:1483px;top:528px;">$s4</div>
<div class="m" style="left:1636px;top:528px;width:151.5px;text-align:right;">20</div>
<div class="m" style="left:1790px;top:528px;width:187px;text-align:right;">0x00000000</div>
<div style="left:1482px;top:544px;width:497px;height:15px;background:#fff;"></div>
<div style="left:1482px;top:559px;width:497px;height:1px;background:#7a8a99;"></div>
<div class="m" style="left:1483px;top:544px;">$s5</div>
<div class="m" style="left:1636px;top:544px;width:151.5px;text-align:right;">21</div>
<div class="m" style="left:1790px;top:544px;width:187px;text-align:right;">0x00000000</div>
<div style="left:1482px;top:560px;width:497px;height:15px;background:#e0e0e0;"></div>
<div style="left:1482px;top:575px;width:497px;height:1px;background:#7a8a99;"></div>
<div class="m" style="left:1483px;top:560px;">$s6</div>
<div class="m" style="left:1636px;top:560px;width:151.5px;text-align:right;">22</div>
<div class="m" style="left:1790px;top:560px;width:187px;text-align:right;">0x00000000</div>
<div style="left:1482px;top:576px;width:497px;height:15px;background:#fff;"></div>
<div style="left:1482px;top:591px;width:497px;height:1px;background:#7a8a99;"></div>
<div class="m" style="left:1483px;top:576px;">$s7</div>
<div class="m" style="left:1636px;top:576px;width:151.5px;text-align:right;">23</div>
<div class="m" style="left:1790px;top:576px;width:187px;text-align:right;">0x00000000</div>
<div style="left:1482px;top:592px;width:497px;height:15px;background:#e0e0e0;"></div>
<div style="left:1482px;top:607px;width:497px;height:1px;background:#7a8a99;"></div>
<div class="m" style="left:1483px;top:592px;">$t8</div>
<div class="m" style="left:1636px;top:592px;width:151.5px;text-align:right;">24</div>
<div class="m" style="left:1790px;top:592px;width:187px;text-align:right;">0x00000000</div>
<div style="left:1482px;top:608px;width:497px;height:15px;background:#fff;"></div>
<div style="left:1482px;top:623px;width:497px;height:1px;background:#7a8a99;"></div>
<div class="m" style="left:1483px;top:608px;">$t9</div>
<div class="m" style="left:1636px;top:608px;width:151.5px;text-align:right;">25</div>
<div class="m" style="left:1790px;top:608px;width:187px;text-align:right;">0x00000000</div>
<div style="left:1482px;top:624px;width:497px;height:15px;background:#e0e0e0;"></div>
<div style="left:1482px;top:639px;width:497px;height:1px;background:#7a8a99;"></div>
<div class="m" style="left:1483px;top:624px;">$k0</div>
<div class="m" style="left:1636px;top:624px;width:151.5px;text-align:right;">26</div>
<div class="m" style="left:1790px;top:624px;width:187px;text-align:right;">0x00000000</div>
<div style="left:1482px;top:640px;width:497px;height:15px;background:#fff;"></div>
<div style="left:1482px;top:655px;width:497px;height:1px;background:#7a8a99;"></div>
<div class="m" style="left:1483px;top:640px;">$k1</div>
<div class="m" style="left:1636px;top:640px;width:151.5px;text-align:right;">27</div>
<div class="m" style="left:1790px;top:640px;width:187px;text-align:right;">0x00000000</div>
<div style="left:1482px;top:656px;width:497px;height:15px;background:#e0e0e0;"></div>
<div style="left:1482px;top:671px;width:497px;height:1px;background:#7a8a99;"></div>
<div class="m" style="left:1483px;top:656px;">$gp</div>
<div class="m" style="left:1636px;top:656px;width:151.5px;text-align:right;">28</div>
<div class="m" style="left:1790px;top:656px;width:187px;text-align:right;">0x10008000</div>
<div style="left:1482px;top:672px;width:497px;height:15px;background:#fff;"></div>
<div style="left:1482px;top:687px;width:497px;height:1px;background:#7a8a99;"></div>
<div class="m" style="left:1483px;top:672px;">$sp</div>
<div class="m" style="left:1636px;top:672px;width:151.5px;text-align:right;">29</div>
<div class="m" style="left:1790px;top:672px;width:187px;text-align:right;">0x7fffeffc</div>
<div style="left:1482px;top:688px;width:497px;height:15px;background:#e0e0e0;"></div>
<div style="left:1482px;top:703px;width:497px;height:1px;background:#7a8a99;"></div>
<div class="m" style="left:1483px;top:688px;">$fp</div>
<div class="m" style="left:1636px;top:688px;width:151.5px;text-align:right;">30</div>
<div class="m" style="left:1790px;top:688px;width:187px;text-align:right;">0x00000000</div>
<div style="left:1482px;top:704px;width:497px;height:15px;background:#fff;"></div>
<div style="left:1482px;top:719px;width:497px;height:1px;background:#7a8a99;"></div>
<div class="m" style="left:1483px;top:704px;">$ra</div>
<div class="m" style="left:1636px;top:704px;width:151.5px;text-align:right;">31</div>
<div class="m" style="left:1790px;top:704px;width:187px;text-align:right;">0x00000000</div>
<div style="left:1482px;top:720px;width:497px;height:15px;background:#e0e0e0;"></div>
<div style="left:1482px;top:735px;width:497px;height:1px;background:#7a8a99;"></div>
<div class="m" style="left:1483px;top:720px;">pc</div>
<div class="m" style="left:1790px;top:720px;width:187px;text-align:right;">0x0040001c</div>
<div style="left:1482px;top:736px;width:497px;height:15px;background:#fff;"></div>
<div style="left:1482px;top:751px;width:497px;height:1px;background:#7a8a99;"></div>
<div class="m" style="left:1483px;top:736px;">hi</div>
<div class="m" style="left:1790px;top:736px;width:187px;text-align:right;">0x00000000</div>
<div style="left:1482px;top:752px;width:497px;height:15px;background:#e0e0e0;"></div>
<div style="left:1482px;top:767px;width:497px;height:1px;background:#7a8a99;"></div>
<div class="m" style="left:1483px;top:752px;">lo</div>
<div class="m" style="left:1790px;top:752px;width:187px;text-align:right;">0x00000000</div>
<div style="left:1635px;top:208px;width:1px;height:560px;background:#7a8a99;"></div>
<div style="left:1789px;top:208px;width:1px;height:560px;background:#7a8a99;"></div>
<div style="left:1978px;top:208px;width:1px;height:560px;background:#7a8a99;"></div>
</div>
</body></html>
